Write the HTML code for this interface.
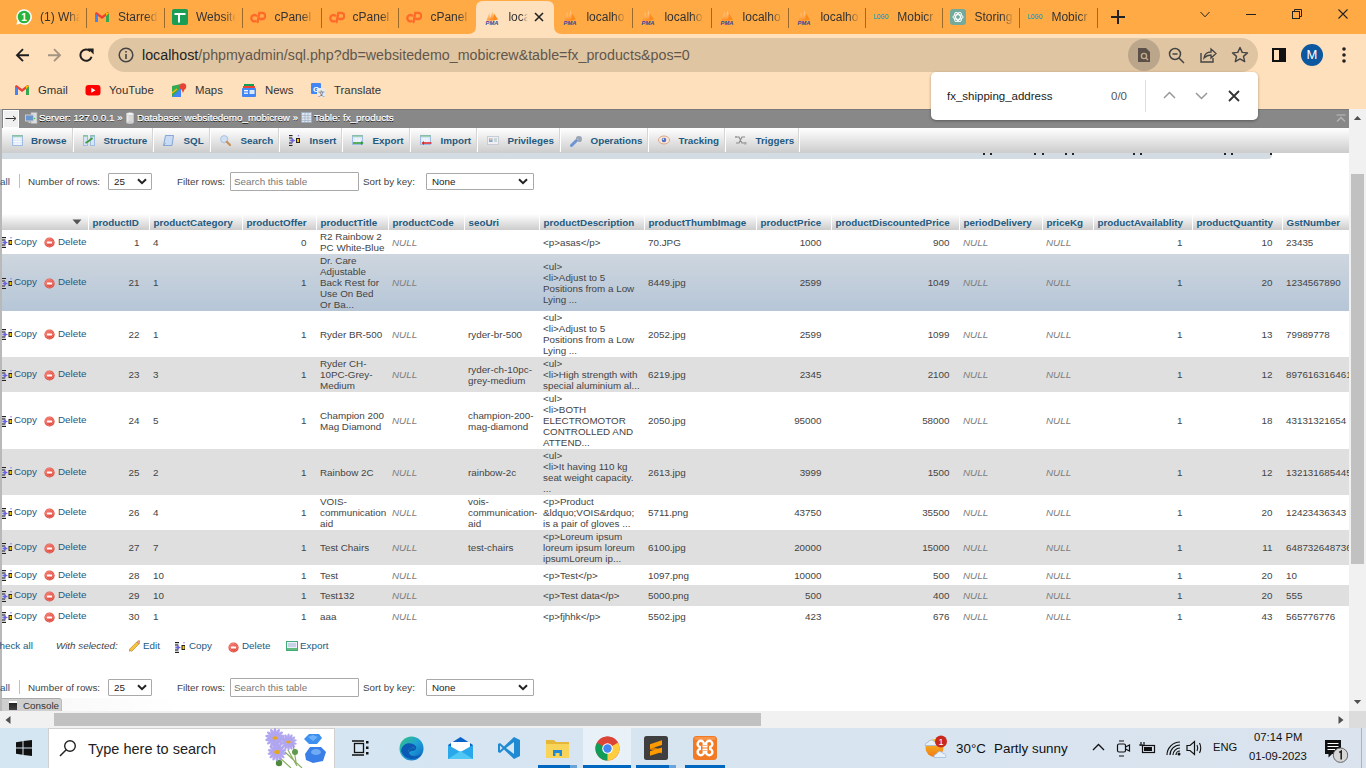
<!DOCTYPE html><html><head><meta charset="utf-8"><style>
*{box-sizing:border-box;margin:0;padding:0}
html,body{width:1366px;height:768px;overflow:hidden;background:#fff;font-family:"Liberation Sans",sans-serif;position:relative}
.abs{position:absolute}
.abs>svg,.ic>svg{display:block}
#tabs{position:absolute;left:0;top:0;width:1366px;height:34px;background:#FFAA45}
.tab{position:absolute;top:0;height:34px;width:78px}
.tab .t{position:absolute;left:32px;top:10px;font-size:12px;color:#333;white-space:nowrap;overflow:hidden;width:40px;
 -webkit-mask-image:linear-gradient(90deg,#000 70%,transparent 100%)}
.tab .ic{position:absolute;left:8px;top:9px;width:16px;height:16px}
.sep{position:absolute;top:8px;width:1px;height:20px;background:#9a6a2a}
#toolbar{position:absolute;left:0;top:34px;width:1366px;height:75px;background:#FFE0BC}
#omni{position:absolute;left:108px;top:38px;width:1150px;height:34px;border-radius:17px;background:#E0C5A2}
#url{position:absolute;left:142px;top:47px;font-size:14.25px;color:#3a3a3a;white-space:nowrap}
.bm{position:absolute;top:83.5px;font-size:11.4px;color:#333;white-space:nowrap}
#pma{position:absolute;left:0;top:109px;width:1349px;height:602px;overflow:hidden;background:#fff}
</style></head><body>
<div id="tabs">
<div class="tab" style="left:8px"><div class="ic"><svg width="16" height="16" viewBox="0 0 16 16"><path d="M8 0.3A7.7 7.7 0 0 0 1.4 11.9L0.3 15.7L4.2 14.6A7.7 7.7 0 1 0 8 0.3z" fill="#fff"/><circle cx="8" cy="8" r="6.3" fill="#29B43F"/><text x="8" y="11.6" font-size="10" font-family="Liberation Sans" font-weight="bold" fill="#fff" text-anchor="middle">1</text></svg></div><div class="t">(1) Wha</div></div>
<div class="tab" style="left:86px"><div class="ic"><svg width="16" height="16" viewBox="0 0 16 16"><path d="M1 4v9h3V7l4 3 4-3v6h3V4l-1.5-1L8 7 2.5 3z" fill="#EA4335"/><path d="M1 4v9h3V7z" fill="#4285F4"/><path d="M12 7v6h3V4z" fill="#34A853"/><path d="M15 4l-3 3V3.5z" fill="#FBBC04"/></svg></div><div class="t">Starred</div></div>
<div class="tab" style="left:164px"><div class="ic"><svg width="16" height="16" viewBox="0 0 16 16"><rect x="0" y="0" width="16" height="16" rx="2" fill="#1A9D55"/><rect x="2.5" y="4" width="11" height="2" fill="#fff"/><rect x="6" y="4" width="2" height="9.5" fill="#fff"/></svg></div><div class="t">Website</div></div>
<div class="tab" style="left:242.4px"><div class="ic"><svg width="16" height="16" viewBox="0 0 16 16"><g fill="none" stroke="#FF6A2A" stroke-width="2.3" stroke-linecap="round"><path d="M6.3 6.6A3.2 3.2 0 1 0 5.6 12.2"/><path d="M7.6 13L9.3 3.8H12.2A3.1 3.1 0 0 1 12.2 10H10.2"/></g></svg></div><div class="t">cPanel</div></div>
<div class="tab" style="left:320.6px"><div class="ic"><svg width="16" height="16" viewBox="0 0 16 16"><g fill="none" stroke="#FF6A2A" stroke-width="2.3" stroke-linecap="round"><path d="M6.3 6.6A3.2 3.2 0 1 0 5.6 12.2"/><path d="M7.6 13L9.3 3.8H12.2A3.1 3.1 0 0 1 12.2 10H10.2"/></g></svg></div><div class="t">cPanel</div></div>
<div class="tab" style="left:398.4px"><div class="ic"><svg width="16" height="16" viewBox="0 0 16 16"><g fill="none" stroke="#FF6A2A" stroke-width="2.3" stroke-linecap="round"><path d="M6.3 6.6A3.2 3.2 0 1 0 5.6 12.2"/><path d="M7.6 13L9.3 3.8H12.2A3.1 3.1 0 0 1 12.2 10H10.2"/></g></svg></div><div class="t">cPanel</div></div>
<div class="abs" style="left:468px;top:0;width:94px;height:34px"><svg width="94" height="34"><path d="M0 34 Q8 34 8 26 V8 Q8 1 15 1 H79 Q86 1 86 8 V26 Q86 34 94 34 Z" fill="#FFE0BC"/></svg></div>
<div class="tab" style="left:476.4px"><div class="ic"><svg width="16" height="16" viewBox="0 0 16 16"><defs><linearGradient id="pg" x1="0" y1="0" x2="0" y2="1"><stop offset="0" stop-color="#ffd8a8"/><stop offset="1" stop-color="#ff8a1c"/></linearGradient></defs><path d="M2.5 11.5L5.5 3L6.5 11.5Z" fill="url(#pg)" opacity=".8"/><path d="M5.5 11.5L8.7 1.5L10.5 11.5Z" fill="url(#pg)"/><path d="M9 11.5L10 4.5L14 10.5Z" fill="#ff8a1c"/><text x="8" y="15.8" font-size="5.8" font-family="Liberation Sans" font-weight="bold" font-style="italic" fill="#34449a" text-anchor="middle">PMA</text></svg></div><div class="t" style="width:20px;-webkit-mask-image:linear-gradient(90deg,#000 65%,transparent 100%)">loca</div><svg class="abs" style="left:57px;top:11px" width="12" height="12" viewBox="0 0 12 12"><path d="M2 2L10 10M10 2L2 10" stroke="#222" stroke-width="1.6"/></svg></div>
<div class="tab" style="left:554.4px"><div class="ic"><svg width="16" height="16" viewBox="0 0 16 16"><defs><linearGradient id="pg" x1="0" y1="0" x2="0" y2="1"><stop offset="0" stop-color="#ffd8a8"/><stop offset="1" stop-color="#ff8a1c"/></linearGradient></defs><path d="M2.5 11.5L5.5 3L6.5 11.5Z" fill="url(#pg)" opacity=".8"/><path d="M5.5 11.5L8.7 1.5L10.5 11.5Z" fill="url(#pg)"/><path d="M9 11.5L10 4.5L14 10.5Z" fill="#ff8a1c"/><text x="8" y="15.8" font-size="5.8" font-family="Liberation Sans" font-weight="bold" font-style="italic" fill="#34449a" text-anchor="middle">PMA</text></svg></div><div class="t">localho</div></div>
<div class="tab" style="left:632.4px"><div class="ic"><svg width="16" height="16" viewBox="0 0 16 16"><defs><linearGradient id="pg" x1="0" y1="0" x2="0" y2="1"><stop offset="0" stop-color="#ffd8a8"/><stop offset="1" stop-color="#ff8a1c"/></linearGradient></defs><path d="M2.5 11.5L5.5 3L6.5 11.5Z" fill="url(#pg)" opacity=".8"/><path d="M5.5 11.5L8.7 1.5L10.5 11.5Z" fill="url(#pg)"/><path d="M9 11.5L10 4.5L14 10.5Z" fill="#ff8a1c"/><text x="8" y="15.8" font-size="5.8" font-family="Liberation Sans" font-weight="bold" font-style="italic" fill="#34449a" text-anchor="middle">PMA</text></svg></div><div class="t">localho</div></div>
<div class="tab" style="left:710.6px"><div class="ic"><svg width="16" height="16" viewBox="0 0 16 16"><defs><linearGradient id="pg" x1="0" y1="0" x2="0" y2="1"><stop offset="0" stop-color="#ffd8a8"/><stop offset="1" stop-color="#ff8a1c"/></linearGradient></defs><path d="M2.5 11.5L5.5 3L6.5 11.5Z" fill="url(#pg)" opacity=".8"/><path d="M5.5 11.5L8.7 1.5L10.5 11.5Z" fill="url(#pg)"/><path d="M9 11.5L10 4.5L14 10.5Z" fill="#ff8a1c"/><text x="8" y="15.8" font-size="5.8" font-family="Liberation Sans" font-weight="bold" font-style="italic" fill="#34449a" text-anchor="middle">PMA</text></svg></div><div class="t">localho</div></div>
<div class="tab" style="left:788.4px"><div class="ic"><svg width="16" height="16" viewBox="0 0 16 16"><defs><linearGradient id="pg" x1="0" y1="0" x2="0" y2="1"><stop offset="0" stop-color="#ffd8a8"/><stop offset="1" stop-color="#ff8a1c"/></linearGradient></defs><path d="M2.5 11.5L5.5 3L6.5 11.5Z" fill="url(#pg)" opacity=".8"/><path d="M5.5 11.5L8.7 1.5L10.5 11.5Z" fill="url(#pg)"/><path d="M9 11.5L10 4.5L14 10.5Z" fill="#ff8a1c"/><text x="8" y="15.8" font-size="5.8" font-family="Liberation Sans" font-weight="bold" font-style="italic" fill="#34449a" text-anchor="middle">PMA</text></svg></div><div class="t">localho</div></div>
<div class="tab" style="left:865.3px"><div class="ic"><svg width="16" height="16" viewBox="0 0 16 16"><text x="0.5" y="10" font-size="6.5" font-family="Liberation Sans" font-weight="bold" fill="#2b9fb5" textLength="15" lengthAdjust="spacingAndGlyphs">LOGO</text></svg></div><div class="t">Mobicr</div></div>
<div class="tab" style="left:942.4px"><div class="ic"><svg width="16" height="16" viewBox="0 0 16 16"><rect width="16" height="16" rx="3" fill="#74AA9C"/><g fill="none" stroke="#fff" stroke-width="1"><ellipse cx="8" cy="8" rx="5" ry="2.3"/><ellipse cx="8" cy="8" rx="5" ry="2.3" transform="rotate(60 8 8)"/><ellipse cx="8" cy="8" rx="5" ry="2.3" transform="rotate(120 8 8)"/></g></svg></div><div class="t">Storing</div></div>
<div class="tab" style="left:1019.4px"><div class="ic"><svg width="16" height="16" viewBox="0 0 16 16"><text x="0.5" y="10" font-size="6.5" font-family="Liberation Sans" font-weight="bold" fill="#2b9fb5" textLength="15" lengthAdjust="spacingAndGlyphs">LOGO</text></svg></div><div class="t">Mobicr</div></div>
<div class="sep" style="left:86px"></div>
<div class="sep" style="left:164px"></div>
<div class="sep" style="left:242px"></div>
<div class="sep" style="left:321px"></div>
<div class="sep" style="left:398px"></div>
<div class="sep" style="left:632px"></div>
<div class="sep" style="left:711px"></div>
<div class="sep" style="left:788px"></div>
<div class="sep" style="left:865px"></div>
<div class="sep" style="left:942px"></div>
<div class="sep" style="left:1019px"></div>
<div class="sep" style="left:1097px"></div>
<svg class="abs" style="left:1110px;top:9px" width="16" height="16" viewBox="0 0 16 16"><path d="M8 1V15M1 8H15" stroke="#222" stroke-width="2"/></svg>
<svg class="abs" style="left:1200px;top:10.5px" width="10" height="7" viewBox="0 0 10 7"><path d="M0.5 1L5 5.8L9.5 1" fill="none" stroke="#222" stroke-width="1"/></svg>
<div class="abs" style="left:1246px;top:14px;width:10px;height:1px;background:#222"></div>
<svg class="abs" style="left:1292px;top:9px" width="10" height="10" viewBox="0 0 10 10"><rect x="0.5" y="2.5" width="7" height="7" fill="none" stroke="#222"/><path d="M2.5 2.5V0.5H9.5V7.5H7.5" fill="none" stroke="#222"/></svg>
<svg class="abs" style="left:1338px;top:9px" width="10" height="10" viewBox="0 0 10 10"><path d="M0.5 0.5L9.5 9.5M9.5 0.5L0.5 9.5" stroke="#222" stroke-width="1.1"/></svg>
</div>
<div id="toolbar"></div>
<svg class="abs" style="left:14.5px;top:48px" width="15" height="15" viewBox="0 0 15 15"><path d="M14 7.2H2.2M8 1.2L2 7.2L8 13.2" fill="none" stroke="#1f1f1f" stroke-width="1.9"/></svg>
<svg class="abs" style="left:46.5px;top:48px" width="15" height="15" viewBox="0 0 15 15"><path d="M1 7.2H12.8M7 1.2L13 7.2L7 13.2" fill="none" stroke="#a39582" stroke-width="1.9"/></svg>
<svg class="abs" style="left:79px;top:48px" width="15" height="15" viewBox="0 0 15 15"><path d="M12.6 8.8A5.7 5.7 0 1 1 11.3 3.2" fill="none" stroke="#1f1f1f" stroke-width="2"/><path d="M8.6 0.6H14.6V6.6Z" fill="#1f1f1f"/></svg>
<div id="omni"></div>
<svg class="abs" style="left:118px;top:47px" width="16" height="16" viewBox="0 0 16 16"><circle cx="8" cy="8" r="6.8" fill="none" stroke="#444" stroke-width="1.5"/><rect x="7.2" y="7" width="1.6" height="5" fill="#444"/><rect x="7.2" y="4" width="1.6" height="1.6" fill="#444"/></svg>
<div id="url"><span style="color:#1e1e1e">localhost</span><span style="color:#62574c">/phpmyadmin/sql.php?db=websitedemo_mobicrew&amp;table=fx_products&amp;pos=0</span></div>
<div class="abs" style="left:1128px;top:39px;width:32px;height:32px;border-radius:16px;background:#BCA68B"></div>
<svg class="abs" style="left:1137px;top:47px" width="14" height="16" viewBox="0 0 14 16"><path d="M1 1H9L13 5V15H1Z" fill="#5a5048"/><circle cx="7" cy="9" r="2.6" fill="none" stroke="#C5AA89" stroke-width="1.4"/><path d="M8.8 10.8L11 13" stroke="#C5AA89" stroke-width="1.4"/></svg>
<svg class="abs" style="left:1168px;top:47px" width="17" height="17" viewBox="0 0 17 17"><circle cx="7" cy="7" r="5.5" fill="none" stroke="#444" stroke-width="1.5"/><path d="M4.5 7H9.5M11 11L16 16" stroke="#444" stroke-width="1.5"/></svg>
<svg class="abs" style="left:1200px;top:47px" width="17" height="16" viewBox="0 0 17 16"><path d="M1 6V15H13V11" fill="none" stroke="#444" stroke-width="1.4"/><path d="M4 11Q5 5 11 5V2L16 6.5L11 11V8Q7 8 4 11Z" fill="none" stroke="#444" stroke-width="1.3"/></svg>
<svg class="abs" style="left:1231px;top:46px" width="18" height="18" viewBox="0 0 18 18"><path d="M9 1.5L11.2 6.4L16.5 6.9L12.5 10.4L13.7 15.6L9 12.9L4.3 15.6L5.5 10.4L1.5 6.9L6.8 6.4Z" fill="none" stroke="#444" stroke-width="1.4" stroke-linejoin="round"/></svg>
<svg class="abs" style="left:1272px;top:48px" width="14" height="14" viewBox="0 0 14 14"><rect x="1" y="1" width="12" height="12" fill="none" stroke="#111" stroke-width="2"/><rect x="7" y="1" width="6" height="12" fill="#111"/></svg>
<div class="abs" style="left:1301px;top:44px;width:22px;height:22px;border-radius:11px;background:#0B57A0;color:#fff;font-size:13px;text-align:center;line-height:22px">M</div>
<svg class="abs" style="left:1342px;top:47px" width="4" height="16" viewBox="0 0 4 16"><circle cx="2" cy="2" r="1.8" fill="#222"/><circle cx="2" cy="8" r="1.8" fill="#222"/><circle cx="2" cy="14" r="1.8" fill="#222"/></svg>
<div class="abs" style="left:14px;top:82px;width:16px;height:16px"><svg width="16" height="16" viewBox="0 0 16 16"><path d="M1 4v9h3V7l4 3 4-3v6h3V4l-1.5-1L8 7 2.5 3z" fill="#EA4335"/><path d="M1 4v9h3V7z" fill="#4285F4"/><path d="M12 7v6h3V4z" fill="#34A853"/><path d="M15 4l-3 3V3.5z" fill="#FBBC04"/></svg></div>
<div class="bm" style="left:38px">Gmail</div>
<div class="abs" style="left:85px;top:82px;width:16px;height:16px"><svg width="16" height="16" viewBox="0 0 16 16"><rect x="0.5" y="3" width="15" height="10.5" rx="3" fill="#FF0000"/><path d="M6.3 5.8V10.8L10.5 8.3Z" fill="#fff"/></svg></div>
<div class="bm" style="left:109px">YouTube</div>
<div class="abs" style="left:171px;top:82px;width:16px;height:16px"><svg width="16" height="16" viewBox="0 0 16 16"><path d="M1 4L10 2V15L1 15Z" fill="#34A853"/><path d="M1 15L10 6V15Z" fill="#4285F4"/><path d="M1 11L6 7" stroke="#FBBC04" stroke-width="1.5"/><circle cx="12" cy="4.5" r="3.2" fill="#EA4335"/><path d="M10 6L12 11L14 6Z" fill="#EA4335"/></svg></div>
<div class="bm" style="left:195px">Maps</div>
<div class="abs" style="left:241px;top:82px;width:16px;height:16px"><svg width="16" height="16" viewBox="0 0 16 16"><rect x="3" y="2" width="10" height="4" fill="#0F9D58"/><rect x="2" y="4" width="12" height="4" fill="#EA4335"/><rect x="1" y="6" width="14" height="9" rx="1" fill="#4285F4"/><rect x="3" y="8" width="4" height="1.3" fill="#fff"/><rect x="3" y="10.5" width="4" height="1.3" fill="#fff"/><rect x="8.5" y="8" width="5" height="4" fill="#fff" opacity=".8"/></svg></div>
<div class="bm" style="left:265px">News</div>
<div class="abs" style="left:310px;top:82px;width:16px;height:16px"><svg width="16" height="16" viewBox="0 0 16 16"><rect x="1" y="1" width="10" height="11" rx="1" fill="#4285F4"/><text x="6" y="9.5" font-size="8" font-family="Liberation Sans" font-weight="bold" fill="#fff" text-anchor="middle">G</text><rect x="7" y="6" width="8" height="9" rx="1" fill="#E8EAED"/><text x="11" y="13.5" font-size="7" font-family="Liberation Sans" fill="#555" text-anchor="middle">文</text></svg></div>
<div class="bm" style="left:334px">Translate</div>
<div id="pma"><div class="abs" style="left:0;top:0;width:2px;height:604px;background:#b9b9b9"></div>
<div class="abs" style="left:2px;top:0px;width:1348px;height:19px;background:#888;border-top:1px solid #7a7a7a"></div>
<div class="abs" style="left:3px;top:1px;width:16px;height:18px;background:#f0f0f0;border:1px solid #fff;"></div>
<svg class="abs" style="left:5px;top:6px" width="12" height="7" viewBox="0 0 12 7"><path d="M0.5 3.5H10.5" stroke="#333" stroke-width="1"/><path d="M8 1L11 3.5L8 6" fill="none" stroke="#333" stroke-width="0.9"/></svg>
<svg class="abs" style="left:25px;top:3px" width="13" height="13" viewBox="0 0 13 13"><rect x="6" y="0.5" width="6" height="11" fill="#ddd" stroke="#aaa" stroke-width=".6"/><rect x="0.5" y="3" width="8" height="6" fill="#6b95cf" stroke="#ccc" stroke-width="1"/><rect x="3.5" y="9.5" width="2" height="1.5" fill="#ccc"/><circle cx="9.5" cy="6.5" r="0.8" fill="#3c3"/></svg>
<div class="abs" style="left:39px;top:2.799999999999997px;color:#fff;font-size:9.84px;text-shadow:0 1px 0 #000;-webkit-text-stroke:0.25px #fff;white-space:nowrap">Server: 127.0.0.1 <span style="font-size:9.5px">»</span></div>
<svg class="abs" style="left:126px;top:3px" width="8" height="12" viewBox="0 0 8 12"><rect x="0.3" y="2" width="7.4" height="8.3" fill="#d8d8d8"/><ellipse cx="4" cy="10.3" rx="3.7" ry="1.5" fill="#d0d0d0"/><ellipse cx="4" cy="2" rx="3.7" ry="1.5" fill="#f4f4f4" stroke="#bbb" stroke-width=".5"/><rect x="1.2" y="3.5" width="1.2" height="6" fill="#fff" opacity=".6"/></svg>
<div class="abs" style="left:137px;top:2.799999999999997px;color:#fff;font-size:9.84px;text-shadow:0 1px 0 #000;-webkit-text-stroke:0.25px #fff;white-space:nowrap">Database: websitedemo_mobicrew <span style="font-size:9.5px">»</span></div>
<svg class="abs" style="left:301px;top:3px" width="11" height="11" viewBox="0 0 11 11"><rect x="0.5" y="0.5" width="10" height="10" fill="#dde6f2" stroke="#9ab" stroke-width=".8"/><path d="M0.5 3.5H10.5M0.5 6H10.5M0.5 8.5H10.5M4 0.5V10.5M7 0.5V10.5" stroke="#9ab" stroke-width=".6"/></svg>
<div class="abs" style="left:314px;top:2.799999999999997px;color:#fff;font-size:9.84px;text-shadow:0 1px 0 #000;-webkit-text-stroke:0.25px #fff;white-space:nowrap">Table: fx_products</div>
<svg class="abs" style="left:1336px;top:5px" width="10" height="9" viewBox="0 0 10 9"><path d="M0.5 1H9.5" stroke="#b5b5b5" stroke-width="1.2"/><path d="M1 7.5L5 3.5L9 7.5" fill="none" stroke="#b5b5b5" stroke-width="1.3"/></svg>
<div class="abs" style="left:2px;top:19px;width:1348px;height:25px;background:linear-gradient(#ffffff,#cccccc)"></div>
<div class="abs" style="left:73px;top:19px;width:1px;height:24px;background:#fff;box-shadow:-1px 0 0 #d5d5d5"></div>
<div class="abs" style="left:31px;top:25.5px;font-size:9.84px;font-weight:bold;color:#235a81;white-space:nowrap">Browse</div>
<div class="abs tabic" style="left:12px;top:26px;width:12px;height:12px"><svg width="11" height="11" viewBox="0 0 11 11"><rect x="0.5" y="0.5" width="10" height="10" fill="#d5e4f6" stroke="#9fbde3"/><path d="M0.5 1H10.5" stroke="#6cbf6c" stroke-width="1"/><path d="M1 4H10M1 6.5H10M1 9H10M4 3V10M7 3V10" stroke="#fff" stroke-width=".8"/></svg></div>
<div class="abs" style="left:153px;top:19px;width:1px;height:24px;background:#fff;box-shadow:-1px 0 0 #d5d5d5"></div>
<div class="abs" style="left:103.5px;top:25.5px;font-size:9.84px;font-weight:bold;color:#235a81;white-space:nowrap">Structure</div>
<div class="abs tabic" style="left:83px;top:26px;width:12px;height:12px"><svg width="12" height="11" viewBox="0 0 12 11"><rect x="0.5" y="0.5" width="4" height="10" fill="#d5e4f6" stroke="#9fbde3"/><rect x="7.5" y="0.5" width="4" height="10" fill="#d5e4f6" stroke="#9fbde3"/><path d="M0.5 1H4.5M7.5 1H11.5" stroke="#6cbf6c"/><path d="M2.5 8L5 6.5L7 5L9.5 3" fill="none" stroke="#3d9a3d" stroke-width="1.8"/></svg></div>
<div class="abs" style="left:210px;top:19px;width:1px;height:24px;background:#fff;box-shadow:-1px 0 0 #d5d5d5"></div>
<div class="abs" style="left:183.5px;top:25.5px;font-size:9.84px;font-weight:bold;color:#235a81;white-space:nowrap">SQL</div>
<div class="abs tabic" style="left:163px;top:26px;width:12px;height:12px"><svg width="11" height="11" viewBox="0 0 11 11"><path d="M2.5 0.5H10.5L9 10.5H0.5Z" fill="#c9dcf3" stroke="#7c9fcf" stroke-width=".9"/><path d="M0.5 10.5Q2 9 2.6 8" stroke="#7c9fcf" fill="none" stroke-width=".8"/></svg></div>
<div class="abs" style="left:279px;top:19px;width:1px;height:24px;background:#fff;box-shadow:-1px 0 0 #d5d5d5"></div>
<div class="abs" style="left:240.5px;top:25.5px;font-size:9.84px;font-weight:bold;color:#235a81;white-space:nowrap">Search</div>
<div class="abs tabic" style="left:220px;top:26px;width:12px;height:12px"><svg width="11" height="11" viewBox="0 0 11 11"><circle cx="4.2" cy="4.2" r="3.6" fill="#cfe0f5" stroke="#a9c0dc" stroke-width="1"/><path d="M6.8 6.8L10 10" stroke="#c8905a" stroke-width="2.2" stroke-linecap="round"/></svg></div>
<div class="abs" style="left:342px;top:19px;width:1px;height:24px;background:#fff;box-shadow:-1px 0 0 #d5d5d5"></div>
<div class="abs" style="left:309.5px;top:25.5px;font-size:9.84px;font-weight:bold;color:#235a81;white-space:nowrap">Insert</div>
<div class="abs tabic" style="left:289px;top:26px;width:12px;height:12px"><svg width="11" height="11" viewBox="0 0 11 11"><rect x="0" y="0" width="3.5" height="11" fill="#d0d0d0"/><path d="M0 0.5H3.5M0 3H3M0 8H3M0 10.5H3.5" stroke="#222" stroke-width="1"/><path d="M3.5 2.5L4.4 4.6L6.5 5.5L4.4 6.4L3.5 8.5L2.6 6.4L0.5 5.5L2.6 4.6Z" fill="#6c63e0"/><rect x="7.5" y="3.5" width="3" height="4" fill="#f5c400" stroke="#222" stroke-width="1"/><circle cx="9.5" cy="0.8" r="0.8" fill="#8a7ff0"/></svg></div>
<div class="abs" style="left:410px;top:19px;width:1px;height:24px;background:#fff;box-shadow:-1px 0 0 #d5d5d5"></div>
<div class="abs" style="left:372.5px;top:25.5px;font-size:9.84px;font-weight:bold;color:#235a81;white-space:nowrap">Export</div>
<div class="abs tabic" style="left:352px;top:26px;width:12px;height:12px"><svg width="12" height="11" viewBox="0 0 12 11"><rect x="0.5" y="0.5" width="10" height="9" fill="#d5e4f6" stroke="#9fbde3"/><path d="M0.5 1H10.5" stroke="#6cbf6c"/><path d="M1 4H10M1 6H10M4 3V9M7 3V9" stroke="#fff" stroke-width=".7"/><path d="M1 8H10" stroke="#2a9a2a" stroke-width="1.5"/><path d="M9 6L11.5 8L9 10Z" fill="#2a9a2a"/></svg></div>
<div class="abs" style="left:477px;top:19px;width:1px;height:24px;background:#fff;box-shadow:-1px 0 0 #d5d5d5"></div>
<div class="abs" style="left:440.5px;top:25.5px;font-size:9.84px;font-weight:bold;color:#235a81;white-space:nowrap">Import</div>
<div class="abs tabic" style="left:420px;top:26px;width:12px;height:12px"><svg width="12" height="11" viewBox="0 0 12 11"><rect x="0.5" y="0.5" width="10" height="9" fill="#d5e4f6" stroke="#9fbde3"/><path d="M0.5 1H10.5" stroke="#6cbf6c"/><path d="M1 4H10M1 6H10M4 3V9M7 3V9" stroke="#fff" stroke-width=".7"/><path d="M3 8H11.5" stroke="#e02020" stroke-width="1.5"/><path d="M4 6L1.5 8L4 10Z" fill="#e02020"/></svg></div>
<div class="abs" style="left:560px;top:19px;width:1px;height:24px;background:#fff;box-shadow:-1px 0 0 #d5d5d5"></div>
<div class="abs" style="left:507.5px;top:25.5px;font-size:9.84px;font-weight:bold;color:#235a81;white-space:nowrap">Privileges</div>
<div class="abs tabic" style="left:487px;top:26px;width:12px;height:12px"><svg width="12" height="11" viewBox="0 0 12 11"><rect x="0.5" y="1.5" width="11" height="8" fill="#eef0f4" stroke="#c8ccd4"/><rect x="2" y="3.5" width="3.5" height="3.5" fill="#7aa6d6"/><circle cx="3.7" cy="4.5" r="1" fill="#f2c9a0"/><path d="M7 4H10M7 6H10" stroke="#9aa" stroke-width=".8"/></svg></div>
<div class="abs" style="left:648px;top:19px;width:1px;height:24px;background:#fff;box-shadow:-1px 0 0 #d5d5d5"></div>
<div class="abs" style="left:590.5px;top:25.5px;font-size:9.84px;font-weight:bold;color:#235a81;white-space:nowrap">Operations</div>
<div class="abs tabic" style="left:570px;top:26px;width:12px;height:12px"><svg width="12" height="12" viewBox="0 0 12 12"><path d="M1.5 10.5L6.5 5.5" stroke="#6d95d6" stroke-width="3" stroke-linecap="round"/><path d="M6 4.5A3 3 0 1 1 8.5 7L7.5 6L8.5 5L7.5 4L6.5 5Z" fill="#9aa6b8"/></svg></div>
<div class="abs" style="left:725px;top:19px;width:1px;height:24px;background:#fff;box-shadow:-1px 0 0 #d5d5d5"></div>
<div class="abs" style="left:678.5px;top:25.5px;font-size:9.84px;font-weight:bold;color:#235a81;white-space:nowrap">Tracking</div>
<div class="abs tabic" style="left:658px;top:26px;width:12px;height:12px"><svg width="12" height="10" viewBox="0 0 12 10"><ellipse cx="6" cy="5" rx="5.5" ry="4" fill="#fbe6d6" stroke="#d7a78a" stroke-width="1"/><circle cx="6" cy="5" r="2.3" fill="#4f72c8"/><circle cx="5.4" cy="4.3" r=".7" fill="#fff"/></svg></div>
<div class="abs" style="left:755.5px;top:25.5px;font-size:9.84px;font-weight:bold;color:#235a81;white-space:nowrap">Triggers</div>
<div class="abs tabic" style="left:735px;top:26px;width:12px;height:12px"><svg width="12" height="11" viewBox="0 0 12 11"><path d="M1 2H4L7 8H10M1 8H4L7 2H10" fill="none" stroke="#8a8a8a" stroke-width="1.1"/><rect x="0" y="1" width="2" height="2" fill="#aaa"/><rect x="9" y="7" width="2.5" height="2.5" fill="#aaa"/></svg></div>
<div class="abs" style="left:799px;top:19px;width:1px;height:24px;background:#fff;box-shadow:-1px 0 0 #d5d5d5"></div>
<div class="abs" style="left:2px;top:44px;width:1270px;height:6px;background:#D3DCE3;border-radius:0 0 4px 0"></div>
<div class="abs" style="left:983px;top:44px;width:2px;height:1.5px;background:#222"></div>
<div class="abs" style="left:990px;top:44px;width:2px;height:1.5px;background:#222"></div>
<div class="abs" style="left:1034px;top:44px;width:2px;height:1.5px;background:#222"></div>
<div class="abs" style="left:1042px;top:44px;width:2px;height:1.5px;background:#222"></div>
<div class="abs" style="left:1065px;top:44px;width:2px;height:1.5px;background:#222"></div>
<div class="abs" style="left:1072px;top:44px;width:2px;height:1.5px;background:#222"></div>
<div class="abs" style="left:1133px;top:44px;width:2px;height:1.5px;background:#222"></div>
<div class="abs" style="left:1140px;top:44px;width:2px;height:1.5px;background:#222"></div>
<div class="abs" style="left:1224px;top:44px;width:2px;height:1.5px;background:#222"></div>
<div class="abs" style="left:1231px;top:44px;width:2px;height:1.5px;background:#222"></div>
<div class="abs" style="left:1270px;top:44px;width:2px;height:1.5px;background:#222"></div>
<div class="abs" style="left:0px;top:67px;font-size:9.84px;color:#235a81">all</div>
<div class="abs" style="left:19px;top:65px;width:1px;height:14px;background:#e6b884"></div>
<div class="abs" style="left:28px;top:67px;font-size:9.84px;color:#444">Number of rows:</div>
<div class="abs" style="left:108px;top:63.5px;width:44px;height:17.5px;border:1px solid #a9a9a9;border-radius:1px;background:#fff"></div>
<div class="abs" style="left:114px;top:67px;font-size:9.84px;color:#222">25</div>
<svg class="abs" style="left:137px;top:69px" width="10" height="7" viewBox="0 0 10 7"><path d="M1 1.2L5 5.2L9 1.2" fill="none" stroke="#222" stroke-width="2"/></svg>
<div class="abs" style="left:177px;top:67px;font-size:9.84px;color:#444">Filter rows:</div>
<div class="abs" style="left:230px;top:63px;width:129px;height:18.5px;border:1px solid #a9a9a9;border-radius:1px;background:#fff"></div>
<div class="abs" style="left:234px;top:67px;font-size:9.84px;color:#777">Search this table</div>
<div class="abs" style="left:363px;top:67px;font-size:9.84px;color:#444">Sort by key:</div>
<div class="abs" style="left:426px;top:63.5px;width:108px;height:17.5px;border:1px solid #a9a9a9;border-radius:1px;background:#fff"></div>
<div class="abs" style="left:432px;top:67px;font-size:9.84px;color:#222">None</div>
<svg class="abs" style="left:518px;top:69px" width="10" height="7" viewBox="0 0 10 7"><path d="M1 1.2L5 5.2L9 1.2" fill="none" stroke="#222" stroke-width="2"/></svg>
<div class="abs" style="left:2px;top:105px;width:1348px;height:16px;background:linear-gradient(#ffffff,#cccccc)"></div>
<div class="abs" style="left:88px;top:105px;width:1px;height:16px;background:#fff"></div>
<div class="abs" style="left:92.5px;top:108px;font-size:9.84px;font-weight:bold;color:#235a81;white-space:nowrap">productID</div>
<div class="abs" style="left:149px;top:105px;width:1px;height:16px;background:#fff"></div>
<div class="abs" style="left:153.5px;top:108px;font-size:9.84px;font-weight:bold;color:#235a81;white-space:nowrap">productCategory</div>
<div class="abs" style="left:242px;top:105px;width:1px;height:16px;background:#fff"></div>
<div class="abs" style="left:246.5px;top:108px;font-size:9.84px;font-weight:bold;color:#235a81;white-space:nowrap">productOffer</div>
<div class="abs" style="left:316px;top:105px;width:1px;height:16px;background:#fff"></div>
<div class="abs" style="left:320.5px;top:108px;font-size:9.84px;font-weight:bold;color:#235a81;white-space:nowrap">productTitle</div>
<div class="abs" style="left:388px;top:105px;width:1px;height:16px;background:#fff"></div>
<div class="abs" style="left:392.5px;top:108px;font-size:9.84px;font-weight:bold;color:#235a81;white-space:nowrap">productCode</div>
<div class="abs" style="left:464px;top:105px;width:1px;height:16px;background:#fff"></div>
<div class="abs" style="left:468.5px;top:108px;font-size:9.84px;font-weight:bold;color:#235a81;white-space:nowrap">seoUri</div>
<div class="abs" style="left:539px;top:105px;width:1px;height:16px;background:#fff"></div>
<div class="abs" style="left:543.5px;top:108px;font-size:9.84px;font-weight:bold;color:#235a81;white-space:nowrap">productDescription</div>
<div class="abs" style="left:644px;top:105px;width:1px;height:16px;background:#fff"></div>
<div class="abs" style="left:648.5px;top:108px;font-size:9.84px;font-weight:bold;color:#235a81;white-space:nowrap">productThumbImage</div>
<div class="abs" style="left:756px;top:105px;width:1px;height:16px;background:#fff"></div>
<div class="abs" style="left:760.5px;top:108px;font-size:9.84px;font-weight:bold;color:#235a81;white-space:nowrap">productPrice</div>
<div class="abs" style="left:831px;top:105px;width:1px;height:16px;background:#fff"></div>
<div class="abs" style="left:835.5px;top:108px;font-size:9.84px;font-weight:bold;color:#235a81;white-space:nowrap">productDiscountedPrice</div>
<div class="abs" style="left:959px;top:105px;width:1px;height:16px;background:#fff"></div>
<div class="abs" style="left:963.5px;top:108px;font-size:9.84px;font-weight:bold;color:#235a81;white-space:nowrap">periodDelivery</div>
<div class="abs" style="left:1042px;top:105px;width:1px;height:16px;background:#fff"></div>
<div class="abs" style="left:1046.5px;top:108px;font-size:9.84px;font-weight:bold;color:#235a81;white-space:nowrap">priceKg</div>
<div class="abs" style="left:1093px;top:105px;width:1px;height:16px;background:#fff"></div>
<div class="abs" style="left:1097.5px;top:108px;font-size:9.84px;font-weight:bold;color:#235a81;white-space:nowrap">productAvailablity</div>
<div class="abs" style="left:1192px;top:105px;width:1px;height:16px;background:#fff"></div>
<div class="abs" style="left:1196.5px;top:108px;font-size:9.84px;font-weight:bold;color:#235a81;white-space:nowrap">productQuantity</div>
<div class="abs" style="left:1282px;top:105px;width:1px;height:16px;background:#fff"></div>
<div class="abs" style="left:1286.5px;top:108px;font-size:9.84px;font-weight:bold;color:#235a81;white-space:nowrap">GstNumber</div>
<svg class="abs" style="left:72px;top:110px" width="10" height="6" viewBox="0 0 10 6"><path d="M0.5 0.5H9.5L5 5.5Z" fill="#555"/></svg>
<div class="abs" style="left:2px;top:121px;width:1347px;height:24px;background:#fff"></div>
<div class="abs" style="left:2px;top:128.0px;width:10px;height:11px"><svg width="10" height="11" viewBox="0 0 10 11"><rect x="0" y="0" width="4" height="11" fill="#d0d0d0"/><path d="M0 0.5H4M0 3H3M0 8H3M0 10.5H4" stroke="#222" stroke-width="1"/><path d="M3 2.5L3.9 4.6L6 5.5L3.9 6.4L3 8.5L2.1 6.4L0 5.5L2.1 4.6Z" fill="#6c63e0"/><rect x="7" y="3.5" width="3" height="4" fill="#f5c400" stroke="#222" stroke-width="1"/><circle cx="9" cy="0.8" r="0.8" fill="#8a7ff0"/></svg></div>
<div class="abs" style="left:14px;top:126.5px;font-size:9.84px;color:#235a81">Copy</div>
<div class="abs" style="left:44px;top:128.0px;width:11px;height:11px"><svg width="11" height="11" viewBox="0 0 11 11"><defs><radialGradient id="dg" cx=".4" cy=".35" r=".7"><stop offset="0" stop-color="#f47a6e"/><stop offset="1" stop-color="#d9372b"/></radialGradient></defs><circle cx="5.5" cy="5.5" r="5.1" fill="url(#dg)"/><circle cx="5.5" cy="5.5" r="3.9" fill="none" stroke="#f9b5ae" stroke-width=".7" stroke-dasharray="1 .6"/><rect x="2.8" y="4.6" width="5.4" height="1.9" rx=".5" fill="#fff"/></svg></div>
<div class="abs" style="left:58px;top:126.5px;font-size:9.84px;color:#235a81">Delete</div>
<div class="abs" style="left:88px;width:51.5px;text-align:right;top:127.5px;font-size:9.84px;line-height:11px;white-space:nowrap;color:#444">1</div>
<div class="abs" style="left:153px;top:127.5px;font-size:9.84px;line-height:11px;white-space:nowrap;color:#444">4</div>
<div class="abs" style="left:242px;width:64.5px;text-align:right;top:127.5px;font-size:9.84px;line-height:11px;white-space:nowrap;color:#444">0</div>
<div class="abs" style="left:320px;top:122.0px;font-size:9.84px;line-height:11px;white-space:nowrap;color:#444">R2 Rainbow 2<br>PC White-Blue</div>
<div class="abs" style="left:392px;top:127.5px;font-size:9.84px;line-height:11px;white-space:nowrap;font-style:italic;color:#7d7d7d">NULL</div>
<div class="abs" style="left:468px;top:127.5px;font-size:9.84px;line-height:11px;white-space:nowrap;color:#444"></div>
<div class="abs" style="left:543px;top:127.5px;font-size:9.84px;line-height:11px;white-space:nowrap;color:#444">&lt;p&gt;asas&lt;/p&gt;</div>
<div class="abs" style="left:648px;top:127.5px;font-size:9.84px;line-height:11px;white-space:nowrap;color:#444">70.JPG</div>
<div class="abs" style="left:756px;width:65.5px;text-align:right;top:127.5px;font-size:9.84px;line-height:11px;white-space:nowrap;color:#444">1000</div>
<div class="abs" style="left:831px;width:118.5px;text-align:right;top:127.5px;font-size:9.84px;line-height:11px;white-space:nowrap;color:#444">900</div>
<div class="abs" style="left:963px;top:127.5px;font-size:9.84px;line-height:11px;white-space:nowrap;font-style:italic;color:#7d7d7d">NULL</div>
<div class="abs" style="left:1046px;top:127.5px;font-size:9.84px;line-height:11px;white-space:nowrap;font-style:italic;color:#7d7d7d">NULL</div>
<div class="abs" style="left:1093px;width:89.5px;text-align:right;top:127.5px;font-size:9.84px;line-height:11px;white-space:nowrap;color:#444">1</div>
<div class="abs" style="left:1192px;width:80.5px;text-align:right;top:127.5px;font-size:9.84px;line-height:11px;white-space:nowrap;color:#444">10</div>
<div class="abs" style="left:1286px;top:127.5px;font-size:9.84px;line-height:11px;white-space:nowrap;color:#444">23435</div>
<div class="abs" style="left:2px;top:145px;width:1347px;height:57px;background:linear-gradient(#ced6df,#b6c6d7)"></div>
<div class="abs" style="left:2px;top:168.5px;width:10px;height:11px"><svg width="10" height="11" viewBox="0 0 10 11"><rect x="0" y="0" width="4" height="11" fill="#d0d0d0"/><path d="M0 0.5H4M0 3H3M0 8H3M0 10.5H4" stroke="#222" stroke-width="1"/><path d="M3 2.5L3.9 4.6L6 5.5L3.9 6.4L3 8.5L2.1 6.4L0 5.5L2.1 4.6Z" fill="#6c63e0"/><rect x="7" y="3.5" width="3" height="4" fill="#f5c400" stroke="#222" stroke-width="1"/><circle cx="9" cy="0.8" r="0.8" fill="#8a7ff0"/></svg></div>
<div class="abs" style="left:14px;top:167.0px;font-size:9.84px;color:#235a81">Copy</div>
<div class="abs" style="left:44px;top:168.5px;width:11px;height:11px"><svg width="11" height="11" viewBox="0 0 11 11"><defs><radialGradient id="dg" cx=".4" cy=".35" r=".7"><stop offset="0" stop-color="#f47a6e"/><stop offset="1" stop-color="#d9372b"/></radialGradient></defs><circle cx="5.5" cy="5.5" r="5.1" fill="url(#dg)"/><circle cx="5.5" cy="5.5" r="3.9" fill="none" stroke="#f9b5ae" stroke-width=".7" stroke-dasharray="1 .6"/><rect x="2.8" y="4.6" width="5.4" height="1.9" rx=".5" fill="#fff"/></svg></div>
<div class="abs" style="left:58px;top:167.0px;font-size:9.84px;color:#235a81">Delete</div>
<div class="abs" style="left:88px;width:51.5px;text-align:right;top:168.0px;font-size:9.84px;line-height:11px;white-space:nowrap;color:#444">21</div>
<div class="abs" style="left:153px;top:168.0px;font-size:9.84px;line-height:11px;white-space:nowrap;color:#444">1</div>
<div class="abs" style="left:242px;width:64.5px;text-align:right;top:168.0px;font-size:9.84px;line-height:11px;white-space:nowrap;color:#444">1</div>
<div class="abs" style="left:320px;top:146.0px;font-size:9.84px;line-height:11px;white-space:nowrap;color:#444">Dr. Care<br>Adjustable<br>Back Rest for<br>Use On Bed<br>Or Ba...</div>
<div class="abs" style="left:392px;top:168.0px;font-size:9.84px;line-height:11px;white-space:nowrap;font-style:italic;color:#7d7d7d">NULL</div>
<div class="abs" style="left:468px;top:168.0px;font-size:9.84px;line-height:11px;white-space:nowrap;color:#444"></div>
<div class="abs" style="left:543px;top:151.5px;font-size:9.84px;line-height:11px;white-space:nowrap;color:#444">&lt;ul&gt;<br>&lt;li&gt;Adjust to 5<br>Positions from a Low<br>Lying ...</div>
<div class="abs" style="left:648px;top:168.0px;font-size:9.84px;line-height:11px;white-space:nowrap;color:#444">8449.jpg</div>
<div class="abs" style="left:756px;width:65.5px;text-align:right;top:168.0px;font-size:9.84px;line-height:11px;white-space:nowrap;color:#444">2599</div>
<div class="abs" style="left:831px;width:118.5px;text-align:right;top:168.0px;font-size:9.84px;line-height:11px;white-space:nowrap;color:#444">1049</div>
<div class="abs" style="left:963px;top:168.0px;font-size:9.84px;line-height:11px;white-space:nowrap;font-style:italic;color:#7d7d7d">NULL</div>
<div class="abs" style="left:1046px;top:168.0px;font-size:9.84px;line-height:11px;white-space:nowrap;font-style:italic;color:#7d7d7d">NULL</div>
<div class="abs" style="left:1093px;width:89.5px;text-align:right;top:168.0px;font-size:9.84px;line-height:11px;white-space:nowrap;color:#444">1</div>
<div class="abs" style="left:1192px;width:80.5px;text-align:right;top:168.0px;font-size:9.84px;line-height:11px;white-space:nowrap;color:#444">20</div>
<div class="abs" style="left:1286px;top:168.0px;font-size:9.84px;line-height:11px;white-space:nowrap;color:#444">1234567890</div>
<div class="abs" style="left:2px;top:202px;width:1347px;height:46px;background:#fff"></div>
<div class="abs" style="left:2px;top:220.0px;width:10px;height:11px"><svg width="10" height="11" viewBox="0 0 10 11"><rect x="0" y="0" width="4" height="11" fill="#d0d0d0"/><path d="M0 0.5H4M0 3H3M0 8H3M0 10.5H4" stroke="#222" stroke-width="1"/><path d="M3 2.5L3.9 4.6L6 5.5L3.9 6.4L3 8.5L2.1 6.4L0 5.5L2.1 4.6Z" fill="#6c63e0"/><rect x="7" y="3.5" width="3" height="4" fill="#f5c400" stroke="#222" stroke-width="1"/><circle cx="9" cy="0.8" r="0.8" fill="#8a7ff0"/></svg></div>
<div class="abs" style="left:14px;top:218.5px;font-size:9.84px;color:#235a81">Copy</div>
<div class="abs" style="left:44px;top:220.0px;width:11px;height:11px"><svg width="11" height="11" viewBox="0 0 11 11"><defs><radialGradient id="dg" cx=".4" cy=".35" r=".7"><stop offset="0" stop-color="#f47a6e"/><stop offset="1" stop-color="#d9372b"/></radialGradient></defs><circle cx="5.5" cy="5.5" r="5.1" fill="url(#dg)"/><circle cx="5.5" cy="5.5" r="3.9" fill="none" stroke="#f9b5ae" stroke-width=".7" stroke-dasharray="1 .6"/><rect x="2.8" y="4.6" width="5.4" height="1.9" rx=".5" fill="#fff"/></svg></div>
<div class="abs" style="left:58px;top:218.5px;font-size:9.84px;color:#235a81">Delete</div>
<div class="abs" style="left:88px;width:51.5px;text-align:right;top:219.5px;font-size:9.84px;line-height:11px;white-space:nowrap;color:#444">22</div>
<div class="abs" style="left:153px;top:219.5px;font-size:9.84px;line-height:11px;white-space:nowrap;color:#444">1</div>
<div class="abs" style="left:242px;width:64.5px;text-align:right;top:219.5px;font-size:9.84px;line-height:11px;white-space:nowrap;color:#444">1</div>
<div class="abs" style="left:320px;top:219.5px;font-size:9.84px;line-height:11px;white-space:nowrap;color:#444">Ryder BR-500</div>
<div class="abs" style="left:392px;top:219.5px;font-size:9.84px;line-height:11px;white-space:nowrap;font-style:italic;color:#7d7d7d">NULL</div>
<div class="abs" style="left:468px;top:219.5px;font-size:9.84px;line-height:11px;white-space:nowrap;color:#444">ryder-br-500</div>
<div class="abs" style="left:543px;top:203.0px;font-size:9.84px;line-height:11px;white-space:nowrap;color:#444">&lt;ul&gt;<br>&lt;li&gt;Adjust to 5<br>Positions from a Low<br>Lying ...</div>
<div class="abs" style="left:648px;top:219.5px;font-size:9.84px;line-height:11px;white-space:nowrap;color:#444">2052.jpg</div>
<div class="abs" style="left:756px;width:65.5px;text-align:right;top:219.5px;font-size:9.84px;line-height:11px;white-space:nowrap;color:#444">2599</div>
<div class="abs" style="left:831px;width:118.5px;text-align:right;top:219.5px;font-size:9.84px;line-height:11px;white-space:nowrap;color:#444">1099</div>
<div class="abs" style="left:963px;top:219.5px;font-size:9.84px;line-height:11px;white-space:nowrap;font-style:italic;color:#7d7d7d">NULL</div>
<div class="abs" style="left:1046px;top:219.5px;font-size:9.84px;line-height:11px;white-space:nowrap;font-style:italic;color:#7d7d7d">NULL</div>
<div class="abs" style="left:1093px;width:89.5px;text-align:right;top:219.5px;font-size:9.84px;line-height:11px;white-space:nowrap;color:#444">1</div>
<div class="abs" style="left:1192px;width:80.5px;text-align:right;top:219.5px;font-size:9.84px;line-height:11px;white-space:nowrap;color:#444">13</div>
<div class="abs" style="left:1286px;top:219.5px;font-size:9.84px;line-height:11px;white-space:nowrap;color:#444">79989778</div>
<div class="abs" style="left:2px;top:248px;width:1347px;height:35px;background:#dfdfdf"></div>
<div class="abs" style="left:2px;top:260.5px;width:10px;height:11px"><svg width="10" height="11" viewBox="0 0 10 11"><rect x="0" y="0" width="4" height="11" fill="#d0d0d0"/><path d="M0 0.5H4M0 3H3M0 8H3M0 10.5H4" stroke="#222" stroke-width="1"/><path d="M3 2.5L3.9 4.6L6 5.5L3.9 6.4L3 8.5L2.1 6.4L0 5.5L2.1 4.6Z" fill="#6c63e0"/><rect x="7" y="3.5" width="3" height="4" fill="#f5c400" stroke="#222" stroke-width="1"/><circle cx="9" cy="0.8" r="0.8" fill="#8a7ff0"/></svg></div>
<div class="abs" style="left:14px;top:259.0px;font-size:9.84px;color:#235a81">Copy</div>
<div class="abs" style="left:44px;top:260.5px;width:11px;height:11px"><svg width="11" height="11" viewBox="0 0 11 11"><defs><radialGradient id="dg" cx=".4" cy=".35" r=".7"><stop offset="0" stop-color="#f47a6e"/><stop offset="1" stop-color="#d9372b"/></radialGradient></defs><circle cx="5.5" cy="5.5" r="5.1" fill="url(#dg)"/><circle cx="5.5" cy="5.5" r="3.9" fill="none" stroke="#f9b5ae" stroke-width=".7" stroke-dasharray="1 .6"/><rect x="2.8" y="4.6" width="5.4" height="1.9" rx=".5" fill="#fff"/></svg></div>
<div class="abs" style="left:58px;top:259.0px;font-size:9.84px;color:#235a81">Delete</div>
<div class="abs" style="left:88px;width:51.5px;text-align:right;top:260.0px;font-size:9.84px;line-height:11px;white-space:nowrap;color:#444">23</div>
<div class="abs" style="left:153px;top:260.0px;font-size:9.84px;line-height:11px;white-space:nowrap;color:#444">3</div>
<div class="abs" style="left:242px;width:64.5px;text-align:right;top:260.0px;font-size:9.84px;line-height:11px;white-space:nowrap;color:#444">1</div>
<div class="abs" style="left:320px;top:249.0px;font-size:9.84px;line-height:11px;white-space:nowrap;color:#444">Ryder CH-<br>10PC-Grey-<br>Medium</div>
<div class="abs" style="left:392px;top:260.0px;font-size:9.84px;line-height:11px;white-space:nowrap;font-style:italic;color:#7d7d7d">NULL</div>
<div class="abs" style="left:468px;top:254.5px;font-size:9.84px;line-height:11px;white-space:nowrap;color:#444">ryder-ch-10pc-<br>grey-medium</div>
<div class="abs" style="left:543px;top:249.0px;font-size:9.84px;line-height:11px;white-space:nowrap;color:#444">&lt;ul&gt;<br>&lt;li&gt;High strength with<br>special aluminium al...</div>
<div class="abs" style="left:648px;top:260.0px;font-size:9.84px;line-height:11px;white-space:nowrap;color:#444">6219.jpg</div>
<div class="abs" style="left:756px;width:65.5px;text-align:right;top:260.0px;font-size:9.84px;line-height:11px;white-space:nowrap;color:#444">2345</div>
<div class="abs" style="left:831px;width:118.5px;text-align:right;top:260.0px;font-size:9.84px;line-height:11px;white-space:nowrap;color:#444">2100</div>
<div class="abs" style="left:963px;top:260.0px;font-size:9.84px;line-height:11px;white-space:nowrap;font-style:italic;color:#7d7d7d">NULL</div>
<div class="abs" style="left:1046px;top:260.0px;font-size:9.84px;line-height:11px;white-space:nowrap;font-style:italic;color:#7d7d7d">NULL</div>
<div class="abs" style="left:1093px;width:89.5px;text-align:right;top:260.0px;font-size:9.84px;line-height:11px;white-space:nowrap;color:#444">1</div>
<div class="abs" style="left:1192px;width:80.5px;text-align:right;top:260.0px;font-size:9.84px;line-height:11px;white-space:nowrap;color:#444">12</div>
<div class="abs" style="left:1286px;top:260.0px;font-size:9.84px;line-height:11px;white-space:nowrap;color:#444">897616316461</div>
<div class="abs" style="left:2px;top:283px;width:1347px;height:57px;background:#fff"></div>
<div class="abs" style="left:2px;top:306.5px;width:10px;height:11px"><svg width="10" height="11" viewBox="0 0 10 11"><rect x="0" y="0" width="4" height="11" fill="#d0d0d0"/><path d="M0 0.5H4M0 3H3M0 8H3M0 10.5H4" stroke="#222" stroke-width="1"/><path d="M3 2.5L3.9 4.6L6 5.5L3.9 6.4L3 8.5L2.1 6.4L0 5.5L2.1 4.6Z" fill="#6c63e0"/><rect x="7" y="3.5" width="3" height="4" fill="#f5c400" stroke="#222" stroke-width="1"/><circle cx="9" cy="0.8" r="0.8" fill="#8a7ff0"/></svg></div>
<div class="abs" style="left:14px;top:305.0px;font-size:9.84px;color:#235a81">Copy</div>
<div class="abs" style="left:44px;top:306.5px;width:11px;height:11px"><svg width="11" height="11" viewBox="0 0 11 11"><defs><radialGradient id="dg" cx=".4" cy=".35" r=".7"><stop offset="0" stop-color="#f47a6e"/><stop offset="1" stop-color="#d9372b"/></radialGradient></defs><circle cx="5.5" cy="5.5" r="5.1" fill="url(#dg)"/><circle cx="5.5" cy="5.5" r="3.9" fill="none" stroke="#f9b5ae" stroke-width=".7" stroke-dasharray="1 .6"/><rect x="2.8" y="4.6" width="5.4" height="1.9" rx=".5" fill="#fff"/></svg></div>
<div class="abs" style="left:58px;top:305.0px;font-size:9.84px;color:#235a81">Delete</div>
<div class="abs" style="left:88px;width:51.5px;text-align:right;top:306.0px;font-size:9.84px;line-height:11px;white-space:nowrap;color:#444">24</div>
<div class="abs" style="left:153px;top:306.0px;font-size:9.84px;line-height:11px;white-space:nowrap;color:#444">5</div>
<div class="abs" style="left:242px;width:64.5px;text-align:right;top:306.0px;font-size:9.84px;line-height:11px;white-space:nowrap;color:#444">1</div>
<div class="abs" style="left:320px;top:300.5px;font-size:9.84px;line-height:11px;white-space:nowrap;color:#444">Champion 200<br>Mag Diamond</div>
<div class="abs" style="left:392px;top:306.0px;font-size:9.84px;line-height:11px;white-space:nowrap;font-style:italic;color:#7d7d7d">NULL</div>
<div class="abs" style="left:468px;top:300.5px;font-size:9.84px;line-height:11px;white-space:nowrap;color:#444">champion-200-<br>mag-diamond</div>
<div class="abs" style="left:543px;top:284.0px;font-size:9.84px;line-height:11px;white-space:nowrap;color:#444">&lt;ul&gt;<br>&lt;li&gt;BOTH<br>ELECTROMOTOR<br>CONTROLLED AND<br>ATTEND...</div>
<div class="abs" style="left:648px;top:306.0px;font-size:9.84px;line-height:11px;white-space:nowrap;color:#444">2050.jpg</div>
<div class="abs" style="left:756px;width:65.5px;text-align:right;top:306.0px;font-size:9.84px;line-height:11px;white-space:nowrap;color:#444">95000</div>
<div class="abs" style="left:831px;width:118.5px;text-align:right;top:306.0px;font-size:9.84px;line-height:11px;white-space:nowrap;color:#444">58000</div>
<div class="abs" style="left:963px;top:306.0px;font-size:9.84px;line-height:11px;white-space:nowrap;font-style:italic;color:#7d7d7d">NULL</div>
<div class="abs" style="left:1046px;top:306.0px;font-size:9.84px;line-height:11px;white-space:nowrap;font-style:italic;color:#7d7d7d">NULL</div>
<div class="abs" style="left:1093px;width:89.5px;text-align:right;top:306.0px;font-size:9.84px;line-height:11px;white-space:nowrap;color:#444">1</div>
<div class="abs" style="left:1192px;width:80.5px;text-align:right;top:306.0px;font-size:9.84px;line-height:11px;white-space:nowrap;color:#444">18</div>
<div class="abs" style="left:1286px;top:306.0px;font-size:9.84px;line-height:11px;white-space:nowrap;color:#444">43131321654</div>
<div class="abs" style="left:2px;top:340px;width:1347px;height:46px;background:#dfdfdf"></div>
<div class="abs" style="left:2px;top:358.0px;width:10px;height:11px"><svg width="10" height="11" viewBox="0 0 10 11"><rect x="0" y="0" width="4" height="11" fill="#d0d0d0"/><path d="M0 0.5H4M0 3H3M0 8H3M0 10.5H4" stroke="#222" stroke-width="1"/><path d="M3 2.5L3.9 4.6L6 5.5L3.9 6.4L3 8.5L2.1 6.4L0 5.5L2.1 4.6Z" fill="#6c63e0"/><rect x="7" y="3.5" width="3" height="4" fill="#f5c400" stroke="#222" stroke-width="1"/><circle cx="9" cy="0.8" r="0.8" fill="#8a7ff0"/></svg></div>
<div class="abs" style="left:14px;top:356.5px;font-size:9.84px;color:#235a81">Copy</div>
<div class="abs" style="left:44px;top:358.0px;width:11px;height:11px"><svg width="11" height="11" viewBox="0 0 11 11"><defs><radialGradient id="dg" cx=".4" cy=".35" r=".7"><stop offset="0" stop-color="#f47a6e"/><stop offset="1" stop-color="#d9372b"/></radialGradient></defs><circle cx="5.5" cy="5.5" r="5.1" fill="url(#dg)"/><circle cx="5.5" cy="5.5" r="3.9" fill="none" stroke="#f9b5ae" stroke-width=".7" stroke-dasharray="1 .6"/><rect x="2.8" y="4.6" width="5.4" height="1.9" rx=".5" fill="#fff"/></svg></div>
<div class="abs" style="left:58px;top:356.5px;font-size:9.84px;color:#235a81">Delete</div>
<div class="abs" style="left:88px;width:51.5px;text-align:right;top:357.5px;font-size:9.84px;line-height:11px;white-space:nowrap;color:#444">25</div>
<div class="abs" style="left:153px;top:357.5px;font-size:9.84px;line-height:11px;white-space:nowrap;color:#444">2</div>
<div class="abs" style="left:242px;width:64.5px;text-align:right;top:357.5px;font-size:9.84px;line-height:11px;white-space:nowrap;color:#444">1</div>
<div class="abs" style="left:320px;top:357.5px;font-size:9.84px;line-height:11px;white-space:nowrap;color:#444">Rainbow 2C</div>
<div class="abs" style="left:392px;top:357.5px;font-size:9.84px;line-height:11px;white-space:nowrap;font-style:italic;color:#7d7d7d">NULL</div>
<div class="abs" style="left:468px;top:357.5px;font-size:9.84px;line-height:11px;white-space:nowrap;color:#444">rainbow-2c</div>
<div class="abs" style="left:543px;top:341.0px;font-size:9.84px;line-height:11px;white-space:nowrap;color:#444">&lt;ul&gt;<br>&lt;li&gt;It having 110 kg<br>seat weight capacity.<br>...</div>
<div class="abs" style="left:648px;top:357.5px;font-size:9.84px;line-height:11px;white-space:nowrap;color:#444">2613.jpg</div>
<div class="abs" style="left:756px;width:65.5px;text-align:right;top:357.5px;font-size:9.84px;line-height:11px;white-space:nowrap;color:#444">3999</div>
<div class="abs" style="left:831px;width:118.5px;text-align:right;top:357.5px;font-size:9.84px;line-height:11px;white-space:nowrap;color:#444">1500</div>
<div class="abs" style="left:963px;top:357.5px;font-size:9.84px;line-height:11px;white-space:nowrap;font-style:italic;color:#7d7d7d">NULL</div>
<div class="abs" style="left:1046px;top:357.5px;font-size:9.84px;line-height:11px;white-space:nowrap;font-style:italic;color:#7d7d7d">NULL</div>
<div class="abs" style="left:1093px;width:89.5px;text-align:right;top:357.5px;font-size:9.84px;line-height:11px;white-space:nowrap;color:#444">1</div>
<div class="abs" style="left:1192px;width:80.5px;text-align:right;top:357.5px;font-size:9.84px;line-height:11px;white-space:nowrap;color:#444">12</div>
<div class="abs" style="left:1286px;top:357.5px;font-size:9.84px;line-height:11px;white-space:nowrap;color:#444">132131685445</div>
<div class="abs" style="left:2px;top:386px;width:1347px;height:35px;background:#fff"></div>
<div class="abs" style="left:2px;top:398.5px;width:10px;height:11px"><svg width="10" height="11" viewBox="0 0 10 11"><rect x="0" y="0" width="4" height="11" fill="#d0d0d0"/><path d="M0 0.5H4M0 3H3M0 8H3M0 10.5H4" stroke="#222" stroke-width="1"/><path d="M3 2.5L3.9 4.6L6 5.5L3.9 6.4L3 8.5L2.1 6.4L0 5.5L2.1 4.6Z" fill="#6c63e0"/><rect x="7" y="3.5" width="3" height="4" fill="#f5c400" stroke="#222" stroke-width="1"/><circle cx="9" cy="0.8" r="0.8" fill="#8a7ff0"/></svg></div>
<div class="abs" style="left:14px;top:397.0px;font-size:9.84px;color:#235a81">Copy</div>
<div class="abs" style="left:44px;top:398.5px;width:11px;height:11px"><svg width="11" height="11" viewBox="0 0 11 11"><defs><radialGradient id="dg" cx=".4" cy=".35" r=".7"><stop offset="0" stop-color="#f47a6e"/><stop offset="1" stop-color="#d9372b"/></radialGradient></defs><circle cx="5.5" cy="5.5" r="5.1" fill="url(#dg)"/><circle cx="5.5" cy="5.5" r="3.9" fill="none" stroke="#f9b5ae" stroke-width=".7" stroke-dasharray="1 .6"/><rect x="2.8" y="4.6" width="5.4" height="1.9" rx=".5" fill="#fff"/></svg></div>
<div class="abs" style="left:58px;top:397.0px;font-size:9.84px;color:#235a81">Delete</div>
<div class="abs" style="left:88px;width:51.5px;text-align:right;top:398.0px;font-size:9.84px;line-height:11px;white-space:nowrap;color:#444">26</div>
<div class="abs" style="left:153px;top:398.0px;font-size:9.84px;line-height:11px;white-space:nowrap;color:#444">4</div>
<div class="abs" style="left:242px;width:64.5px;text-align:right;top:398.0px;font-size:9.84px;line-height:11px;white-space:nowrap;color:#444">1</div>
<div class="abs" style="left:320px;top:387.0px;font-size:9.84px;line-height:11px;white-space:nowrap;color:#444">VOIS-<br>communication<br>aid</div>
<div class="abs" style="left:392px;top:398.0px;font-size:9.84px;line-height:11px;white-space:nowrap;font-style:italic;color:#7d7d7d">NULL</div>
<div class="abs" style="left:468px;top:387.0px;font-size:9.84px;line-height:11px;white-space:nowrap;color:#444">vois-<br>communication-<br>aid</div>
<div class="abs" style="left:543px;top:387.0px;font-size:9.84px;line-height:11px;white-space:nowrap;color:#444">&lt;p&gt;Product<br>&amp;ldquo;VOIS&amp;rdquo;<br>is a pair of gloves ...</div>
<div class="abs" style="left:648px;top:398.0px;font-size:9.84px;line-height:11px;white-space:nowrap;color:#444">5711.png</div>
<div class="abs" style="left:756px;width:65.5px;text-align:right;top:398.0px;font-size:9.84px;line-height:11px;white-space:nowrap;color:#444">43750</div>
<div class="abs" style="left:831px;width:118.5px;text-align:right;top:398.0px;font-size:9.84px;line-height:11px;white-space:nowrap;color:#444">35500</div>
<div class="abs" style="left:963px;top:398.0px;font-size:9.84px;line-height:11px;white-space:nowrap;font-style:italic;color:#7d7d7d">NULL</div>
<div class="abs" style="left:1046px;top:398.0px;font-size:9.84px;line-height:11px;white-space:nowrap;font-style:italic;color:#7d7d7d">NULL</div>
<div class="abs" style="left:1093px;width:89.5px;text-align:right;top:398.0px;font-size:9.84px;line-height:11px;white-space:nowrap;color:#444">1</div>
<div class="abs" style="left:1192px;width:80.5px;text-align:right;top:398.0px;font-size:9.84px;line-height:11px;white-space:nowrap;color:#444">20</div>
<div class="abs" style="left:1286px;top:398.0px;font-size:9.84px;line-height:11px;white-space:nowrap;color:#444">12423436343</div>
<div class="abs" style="left:2px;top:421px;width:1347px;height:35px;background:#dfdfdf"></div>
<div class="abs" style="left:2px;top:433.5px;width:10px;height:11px"><svg width="10" height="11" viewBox="0 0 10 11"><rect x="0" y="0" width="4" height="11" fill="#d0d0d0"/><path d="M0 0.5H4M0 3H3M0 8H3M0 10.5H4" stroke="#222" stroke-width="1"/><path d="M3 2.5L3.9 4.6L6 5.5L3.9 6.4L3 8.5L2.1 6.4L0 5.5L2.1 4.6Z" fill="#6c63e0"/><rect x="7" y="3.5" width="3" height="4" fill="#f5c400" stroke="#222" stroke-width="1"/><circle cx="9" cy="0.8" r="0.8" fill="#8a7ff0"/></svg></div>
<div class="abs" style="left:14px;top:432.0px;font-size:9.84px;color:#235a81">Copy</div>
<div class="abs" style="left:44px;top:433.5px;width:11px;height:11px"><svg width="11" height="11" viewBox="0 0 11 11"><defs><radialGradient id="dg" cx=".4" cy=".35" r=".7"><stop offset="0" stop-color="#f47a6e"/><stop offset="1" stop-color="#d9372b"/></radialGradient></defs><circle cx="5.5" cy="5.5" r="5.1" fill="url(#dg)"/><circle cx="5.5" cy="5.5" r="3.9" fill="none" stroke="#f9b5ae" stroke-width=".7" stroke-dasharray="1 .6"/><rect x="2.8" y="4.6" width="5.4" height="1.9" rx=".5" fill="#fff"/></svg></div>
<div class="abs" style="left:58px;top:432.0px;font-size:9.84px;color:#235a81">Delete</div>
<div class="abs" style="left:88px;width:51.5px;text-align:right;top:433.0px;font-size:9.84px;line-height:11px;white-space:nowrap;color:#444">27</div>
<div class="abs" style="left:153px;top:433.0px;font-size:9.84px;line-height:11px;white-space:nowrap;color:#444">7</div>
<div class="abs" style="left:242px;width:64.5px;text-align:right;top:433.0px;font-size:9.84px;line-height:11px;white-space:nowrap;color:#444">1</div>
<div class="abs" style="left:320px;top:433.0px;font-size:9.84px;line-height:11px;white-space:nowrap;color:#444">Test Chairs</div>
<div class="abs" style="left:392px;top:433.0px;font-size:9.84px;line-height:11px;white-space:nowrap;font-style:italic;color:#7d7d7d">NULL</div>
<div class="abs" style="left:468px;top:433.0px;font-size:9.84px;line-height:11px;white-space:nowrap;color:#444">test-chairs</div>
<div class="abs" style="left:543px;top:422.0px;font-size:9.84px;line-height:11px;white-space:nowrap;color:#444">&lt;p&gt;Loreum ipsum<br>loreum ipsum loreum<br>ipsumLoreum ip...</div>
<div class="abs" style="left:648px;top:433.0px;font-size:9.84px;line-height:11px;white-space:nowrap;color:#444">6100.jpg</div>
<div class="abs" style="left:756px;width:65.5px;text-align:right;top:433.0px;font-size:9.84px;line-height:11px;white-space:nowrap;color:#444">20000</div>
<div class="abs" style="left:831px;width:118.5px;text-align:right;top:433.0px;font-size:9.84px;line-height:11px;white-space:nowrap;color:#444">15000</div>
<div class="abs" style="left:963px;top:433.0px;font-size:9.84px;line-height:11px;white-space:nowrap;font-style:italic;color:#7d7d7d">NULL</div>
<div class="abs" style="left:1046px;top:433.0px;font-size:9.84px;line-height:11px;white-space:nowrap;font-style:italic;color:#7d7d7d">NULL</div>
<div class="abs" style="left:1093px;width:89.5px;text-align:right;top:433.0px;font-size:9.84px;line-height:11px;white-space:nowrap;color:#444">1</div>
<div class="abs" style="left:1192px;width:80.5px;text-align:right;top:433.0px;font-size:9.84px;line-height:11px;white-space:nowrap;color:#444">11</div>
<div class="abs" style="left:1286px;top:433.0px;font-size:9.84px;line-height:11px;white-space:nowrap;color:#444">648732648736</div>
<div class="abs" style="left:2px;top:456px;width:1347px;height:20px;background:#fff"></div>
<div class="abs" style="left:2px;top:461.0px;width:10px;height:11px"><svg width="10" height="11" viewBox="0 0 10 11"><rect x="0" y="0" width="4" height="11" fill="#d0d0d0"/><path d="M0 0.5H4M0 3H3M0 8H3M0 10.5H4" stroke="#222" stroke-width="1"/><path d="M3 2.5L3.9 4.6L6 5.5L3.9 6.4L3 8.5L2.1 6.4L0 5.5L2.1 4.6Z" fill="#6c63e0"/><rect x="7" y="3.5" width="3" height="4" fill="#f5c400" stroke="#222" stroke-width="1"/><circle cx="9" cy="0.8" r="0.8" fill="#8a7ff0"/></svg></div>
<div class="abs" style="left:14px;top:459.5px;font-size:9.84px;color:#235a81">Copy</div>
<div class="abs" style="left:44px;top:461.0px;width:11px;height:11px"><svg width="11" height="11" viewBox="0 0 11 11"><defs><radialGradient id="dg" cx=".4" cy=".35" r=".7"><stop offset="0" stop-color="#f47a6e"/><stop offset="1" stop-color="#d9372b"/></radialGradient></defs><circle cx="5.5" cy="5.5" r="5.1" fill="url(#dg)"/><circle cx="5.5" cy="5.5" r="3.9" fill="none" stroke="#f9b5ae" stroke-width=".7" stroke-dasharray="1 .6"/><rect x="2.8" y="4.6" width="5.4" height="1.9" rx=".5" fill="#fff"/></svg></div>
<div class="abs" style="left:58px;top:459.5px;font-size:9.84px;color:#235a81">Delete</div>
<div class="abs" style="left:88px;width:51.5px;text-align:right;top:460.5px;font-size:9.84px;line-height:11px;white-space:nowrap;color:#444">28</div>
<div class="abs" style="left:153px;top:460.5px;font-size:9.84px;line-height:11px;white-space:nowrap;color:#444">10</div>
<div class="abs" style="left:242px;width:64.5px;text-align:right;top:460.5px;font-size:9.84px;line-height:11px;white-space:nowrap;color:#444">1</div>
<div class="abs" style="left:320px;top:460.5px;font-size:9.84px;line-height:11px;white-space:nowrap;color:#444">Test</div>
<div class="abs" style="left:392px;top:460.5px;font-size:9.84px;line-height:11px;white-space:nowrap;font-style:italic;color:#7d7d7d">NULL</div>
<div class="abs" style="left:468px;top:460.5px;font-size:9.84px;line-height:11px;white-space:nowrap;color:#444"></div>
<div class="abs" style="left:543px;top:460.5px;font-size:9.84px;line-height:11px;white-space:nowrap;color:#444">&lt;p&gt;Test&lt;/p&gt;</div>
<div class="abs" style="left:648px;top:460.5px;font-size:9.84px;line-height:11px;white-space:nowrap;color:#444">1097.png</div>
<div class="abs" style="left:756px;width:65.5px;text-align:right;top:460.5px;font-size:9.84px;line-height:11px;white-space:nowrap;color:#444">10000</div>
<div class="abs" style="left:831px;width:118.5px;text-align:right;top:460.5px;font-size:9.84px;line-height:11px;white-space:nowrap;color:#444">500</div>
<div class="abs" style="left:963px;top:460.5px;font-size:9.84px;line-height:11px;white-space:nowrap;font-style:italic;color:#7d7d7d">NULL</div>
<div class="abs" style="left:1046px;top:460.5px;font-size:9.84px;line-height:11px;white-space:nowrap;font-style:italic;color:#7d7d7d">NULL</div>
<div class="abs" style="left:1093px;width:89.5px;text-align:right;top:460.5px;font-size:9.84px;line-height:11px;white-space:nowrap;color:#444">1</div>
<div class="abs" style="left:1192px;width:80.5px;text-align:right;top:460.5px;font-size:9.84px;line-height:11px;white-space:nowrap;color:#444">20</div>
<div class="abs" style="left:1286px;top:460.5px;font-size:9.84px;line-height:11px;white-space:nowrap;color:#444">10</div>
<div class="abs" style="left:2px;top:476px;width:1347px;height:21px;background:#dfdfdf"></div>
<div class="abs" style="left:2px;top:481.5px;width:10px;height:11px"><svg width="10" height="11" viewBox="0 0 10 11"><rect x="0" y="0" width="4" height="11" fill="#d0d0d0"/><path d="M0 0.5H4M0 3H3M0 8H3M0 10.5H4" stroke="#222" stroke-width="1"/><path d="M3 2.5L3.9 4.6L6 5.5L3.9 6.4L3 8.5L2.1 6.4L0 5.5L2.1 4.6Z" fill="#6c63e0"/><rect x="7" y="3.5" width="3" height="4" fill="#f5c400" stroke="#222" stroke-width="1"/><circle cx="9" cy="0.8" r="0.8" fill="#8a7ff0"/></svg></div>
<div class="abs" style="left:14px;top:480.0px;font-size:9.84px;color:#235a81">Copy</div>
<div class="abs" style="left:44px;top:481.5px;width:11px;height:11px"><svg width="11" height="11" viewBox="0 0 11 11"><defs><radialGradient id="dg" cx=".4" cy=".35" r=".7"><stop offset="0" stop-color="#f47a6e"/><stop offset="1" stop-color="#d9372b"/></radialGradient></defs><circle cx="5.5" cy="5.5" r="5.1" fill="url(#dg)"/><circle cx="5.5" cy="5.5" r="3.9" fill="none" stroke="#f9b5ae" stroke-width=".7" stroke-dasharray="1 .6"/><rect x="2.8" y="4.6" width="5.4" height="1.9" rx=".5" fill="#fff"/></svg></div>
<div class="abs" style="left:58px;top:480.0px;font-size:9.84px;color:#235a81">Delete</div>
<div class="abs" style="left:88px;width:51.5px;text-align:right;top:481.0px;font-size:9.84px;line-height:11px;white-space:nowrap;color:#444">29</div>
<div class="abs" style="left:153px;top:481.0px;font-size:9.84px;line-height:11px;white-space:nowrap;color:#444">10</div>
<div class="abs" style="left:242px;width:64.5px;text-align:right;top:481.0px;font-size:9.84px;line-height:11px;white-space:nowrap;color:#444">1</div>
<div class="abs" style="left:320px;top:481.0px;font-size:9.84px;line-height:11px;white-space:nowrap;color:#444">Test132</div>
<div class="abs" style="left:392px;top:481.0px;font-size:9.84px;line-height:11px;white-space:nowrap;font-style:italic;color:#7d7d7d">NULL</div>
<div class="abs" style="left:468px;top:481.0px;font-size:9.84px;line-height:11px;white-space:nowrap;color:#444"></div>
<div class="abs" style="left:543px;top:481.0px;font-size:9.84px;line-height:11px;white-space:nowrap;color:#444">&lt;p&gt;Test data&lt;/p&gt;</div>
<div class="abs" style="left:648px;top:481.0px;font-size:9.84px;line-height:11px;white-space:nowrap;color:#444">5000.png</div>
<div class="abs" style="left:756px;width:65.5px;text-align:right;top:481.0px;font-size:9.84px;line-height:11px;white-space:nowrap;color:#444">500</div>
<div class="abs" style="left:831px;width:118.5px;text-align:right;top:481.0px;font-size:9.84px;line-height:11px;white-space:nowrap;color:#444">400</div>
<div class="abs" style="left:963px;top:481.0px;font-size:9.84px;line-height:11px;white-space:nowrap;font-style:italic;color:#7d7d7d">NULL</div>
<div class="abs" style="left:1046px;top:481.0px;font-size:9.84px;line-height:11px;white-space:nowrap;font-style:italic;color:#7d7d7d">NULL</div>
<div class="abs" style="left:1093px;width:89.5px;text-align:right;top:481.0px;font-size:9.84px;line-height:11px;white-space:nowrap;color:#444">1</div>
<div class="abs" style="left:1192px;width:80.5px;text-align:right;top:481.0px;font-size:9.84px;line-height:11px;white-space:nowrap;color:#444">20</div>
<div class="abs" style="left:1286px;top:481.0px;font-size:9.84px;line-height:11px;white-space:nowrap;color:#444">555</div>
<div class="abs" style="left:2px;top:497px;width:1347px;height:21px;background:#fff"></div>
<div class="abs" style="left:2px;top:502.5px;width:10px;height:11px"><svg width="10" height="11" viewBox="0 0 10 11"><rect x="0" y="0" width="4" height="11" fill="#d0d0d0"/><path d="M0 0.5H4M0 3H3M0 8H3M0 10.5H4" stroke="#222" stroke-width="1"/><path d="M3 2.5L3.9 4.6L6 5.5L3.9 6.4L3 8.5L2.1 6.4L0 5.5L2.1 4.6Z" fill="#6c63e0"/><rect x="7" y="3.5" width="3" height="4" fill="#f5c400" stroke="#222" stroke-width="1"/><circle cx="9" cy="0.8" r="0.8" fill="#8a7ff0"/></svg></div>
<div class="abs" style="left:14px;top:501.0px;font-size:9.84px;color:#235a81">Copy</div>
<div class="abs" style="left:44px;top:502.5px;width:11px;height:11px"><svg width="11" height="11" viewBox="0 0 11 11"><defs><radialGradient id="dg" cx=".4" cy=".35" r=".7"><stop offset="0" stop-color="#f47a6e"/><stop offset="1" stop-color="#d9372b"/></radialGradient></defs><circle cx="5.5" cy="5.5" r="5.1" fill="url(#dg)"/><circle cx="5.5" cy="5.5" r="3.9" fill="none" stroke="#f9b5ae" stroke-width=".7" stroke-dasharray="1 .6"/><rect x="2.8" y="4.6" width="5.4" height="1.9" rx=".5" fill="#fff"/></svg></div>
<div class="abs" style="left:58px;top:501.0px;font-size:9.84px;color:#235a81">Delete</div>
<div class="abs" style="left:88px;width:51.5px;text-align:right;top:502.0px;font-size:9.84px;line-height:11px;white-space:nowrap;color:#444">30</div>
<div class="abs" style="left:153px;top:502.0px;font-size:9.84px;line-height:11px;white-space:nowrap;color:#444">1</div>
<div class="abs" style="left:242px;width:64.5px;text-align:right;top:502.0px;font-size:9.84px;line-height:11px;white-space:nowrap;color:#444">1</div>
<div class="abs" style="left:320px;top:502.0px;font-size:9.84px;line-height:11px;white-space:nowrap;color:#444">aaa</div>
<div class="abs" style="left:392px;top:502.0px;font-size:9.84px;line-height:11px;white-space:nowrap;font-style:italic;color:#7d7d7d">NULL</div>
<div class="abs" style="left:468px;top:502.0px;font-size:9.84px;line-height:11px;white-space:nowrap;color:#444"></div>
<div class="abs" style="left:543px;top:502.0px;font-size:9.84px;line-height:11px;white-space:nowrap;color:#444">&lt;p&gt;fjhhk&lt;/p&gt;</div>
<div class="abs" style="left:648px;top:502.0px;font-size:9.84px;line-height:11px;white-space:nowrap;color:#444">5502.jpg</div>
<div class="abs" style="left:756px;width:65.5px;text-align:right;top:502.0px;font-size:9.84px;line-height:11px;white-space:nowrap;color:#444">423</div>
<div class="abs" style="left:831px;width:118.5px;text-align:right;top:502.0px;font-size:9.84px;line-height:11px;white-space:nowrap;color:#444">676</div>
<div class="abs" style="left:963px;top:502.0px;font-size:9.84px;line-height:11px;white-space:nowrap;font-style:italic;color:#7d7d7d">NULL</div>
<div class="abs" style="left:1046px;top:502.0px;font-size:9.84px;line-height:11px;white-space:nowrap;font-style:italic;color:#7d7d7d">NULL</div>
<div class="abs" style="left:1093px;width:89.5px;text-align:right;top:502.0px;font-size:9.84px;line-height:11px;white-space:nowrap;color:#444">1</div>
<div class="abs" style="left:1192px;width:80.5px;text-align:right;top:502.0px;font-size:9.84px;line-height:11px;white-space:nowrap;color:#444">43</div>
<div class="abs" style="left:1286px;top:502.0px;font-size:9.84px;line-height:11px;white-space:nowrap;color:#444">565776776</div>
<div class="abs" style="left:-0.5px;top:531.0px;font-size:9.84px;color:#235a81">heck all</div>
<div class="abs" style="left:56px;top:531.0px;font-size:9.84px;font-style:italic;color:#444">With selected:</div>
<div class="abs" style="left:128px;top:531px;width:12px;height:12px"><svg width="12" height="12" viewBox="0 0 12 12"><path d="M3 11L1 11.5L1.5 9.3Z" fill="#c8684a"/><path d="M1.5 9.3L8.8 2L10.9 4.1L3.6 11.4Z" fill="#f6c445" stroke="#c08a1a" stroke-width=".7"/><path d="M8.8 2L9.8 1A1 1 0 0 1 11.9 3.1L10.9 4.1Z" fill="#e9a0a0" stroke="#c08a1a" stroke-width=".6"/></svg></div>
<div class="abs" style="left:143px;top:531.0px;font-size:9.84px;color:#235a81">Edit</div>
<div class="abs" style="left:175px;top:533px;width:10px;height:11px"><svg width="10" height="11" viewBox="0 0 10 11"><rect x="0" y="0" width="4" height="11" fill="#d0d0d0"/><path d="M0 0.5H4M0 3H3M0 8H3M0 10.5H4" stroke="#222" stroke-width="1"/><path d="M3 2.5L3.9 4.6L6 5.5L3.9 6.4L3 8.5L2.1 6.4L0 5.5L2.1 4.6Z" fill="#6c63e0"/><rect x="7" y="3.5" width="3" height="4" fill="#f5c400" stroke="#222" stroke-width="1"/><circle cx="9" cy="0.8" r="0.8" fill="#8a7ff0"/></svg></div>
<div class="abs" style="left:189px;top:531.0px;font-size:9.84px;color:#235a81">Copy</div>
<div class="abs" style="left:228px;top:532.5px;width:11px;height:11px"><svg width="11" height="11" viewBox="0 0 11 11"><defs><radialGradient id="dg" cx=".4" cy=".35" r=".7"><stop offset="0" stop-color="#f47a6e"/><stop offset="1" stop-color="#d9372b"/></radialGradient></defs><circle cx="5.5" cy="5.5" r="5.1" fill="url(#dg)"/><circle cx="5.5" cy="5.5" r="3.9" fill="none" stroke="#f9b5ae" stroke-width=".7" stroke-dasharray="1 .6"/><rect x="2.8" y="4.6" width="5.4" height="1.9" rx=".5" fill="#fff"/></svg></div>
<div class="abs" style="left:242px;top:531.0px;font-size:9.84px;color:#235a81">Delete</div>
<div class="abs" style="left:286px;top:531px;width:12px;height:12px"><svg width="12" height="12" viewBox="0 0 12 12"><rect x="0.5" y="1.5" width="11" height="9" fill="#eef" stroke="#4a7" stroke-width="1"/><path d="M2 4H10M2 6H10" stroke="#8ab" stroke-width=".8"/><path d="M1 9H11" stroke="#3a5" stroke-width="1.5"/></svg></div>
<div class="abs" style="left:300px;top:531.0px;font-size:9.84px;color:#235a81">Export</div>
<div class="abs" style="left:0px;top:573px;font-size:9.84px;color:#235a81">all</div>
<div class="abs" style="left:19px;top:571px;width:1px;height:14px;background:#e6b884"></div>
<div class="abs" style="left:28px;top:573px;font-size:9.84px;color:#444">Number of rows:</div>
<div class="abs" style="left:108px;top:569.5px;width:44px;height:17.5px;border:1px solid #a9a9a9;border-radius:1px;background:#fff"></div>
<div class="abs" style="left:114px;top:573px;font-size:9.84px;color:#222">25</div>
<svg class="abs" style="left:137px;top:575px" width="10" height="7" viewBox="0 0 10 7"><path d="M1 1.2L5 5.2L9 1.2" fill="none" stroke="#222" stroke-width="2"/></svg>
<div class="abs" style="left:177px;top:573px;font-size:9.84px;color:#444">Filter rows:</div>
<div class="abs" style="left:230px;top:569px;width:129px;height:18.5px;border:1px solid #a9a9a9;border-radius:1px;background:#fff"></div>
<div class="abs" style="left:234px;top:573px;font-size:9.84px;color:#777">Search this table</div>
<div class="abs" style="left:363px;top:573px;font-size:9.84px;color:#444">Sort by key:</div>
<div class="abs" style="left:426px;top:569.5px;width:108px;height:17.5px;border:1px solid #a9a9a9;border-radius:1px;background:#fff"></div>
<div class="abs" style="left:432px;top:573px;font-size:9.84px;color:#222">None</div>
<svg class="abs" style="left:518px;top:575px" width="10" height="7" viewBox="0 0 10 7"><path d="M1 1.2L5 5.2L9 1.2" fill="none" stroke="#222" stroke-width="2"/></svg>
<div class="abs" style="left:62px;top:589px;width:120px;height:13px;background:linear-gradient(90deg,rgba(0,0,0,.025),rgba(0,0,0,0))"></div>
<div class="abs" style="left:2px;top:589px;width:60px;height:14px;background:#cfcfcf;border-top:1px solid #aaa;border-right:1px solid #bbb;border-radius:0 3px 0 0"></div>
<div class="abs" style="left:9px;top:592px;width:8px;height:9px;background:linear-gradient(#fff 0,#fff 20%,#222 20%,#444 100%)"></div>
<div class="abs" style="left:23px;top:590.8px;font-size:9.84px;color:#333">Console</div></div>
<div class="abs" style="left:1349px;top:109px;width:17px;height:602px;background:#f1f1f1"></div>
<svg class="abs" style="left:1353px;top:115px" width="9" height="6" viewBox="0 0 9 6"><path d="M0.8 5L4.5 1L8.2 5Z" fill="#505050"/></svg>
<div class="abs" style="left:1351px;top:174px;width:13px;height:390px;background:#c1c1c1"></div>
<svg class="abs" style="left:1353px;top:699px" width="9" height="6" viewBox="0 0 9 6"><path d="M0.8 1L4.5 5L8.2 1Z" fill="#505050"/></svg>
<div class="abs" style="left:0;top:711px;width:1349px;height:17px;background:#f1f1f1"></div>
<div class="abs" style="left:1349px;top:711px;width:17px;height:17px;background:#dcdcdc"></div>
<svg class="abs" style="left:4px;top:715px" width="8" height="10" viewBox="0 0 8 10"><path d="M6.5 1L1.5 5L6.5 9Z" fill="#505050"/></svg>
<div class="abs" style="left:54px;top:713px;width:707px;height:13px;background:#c1c1c1"></div>
<svg class="abs" style="left:1337px;top:715px" width="8" height="10" viewBox="0 0 8 10"><path d="M1.5 1L6.5 5L1.5 9Z" fill="#505050"/></svg>
<div class="abs" style="left:931px;top:72px;width:327px;height:48px;background:#fff;border-radius:5px;box-shadow:0 1px 3px rgba(0,0,0,.35)"></div>
<div class="abs" style="left:947px;top:89.5px;font-size:11.5px;color:#222;white-space:nowrap">fx_shipping_address</div>
<div class="abs" style="left:1111px;top:89.5px;font-size:11.5px;color:#555;white-space:nowrap">0/0</div>
<div class="abs" style="left:1145px;top:80px;width:1px;height:32px;background:#ddd"></div>
<svg class="abs" style="left:1163px;top:91px" width="13" height="8" viewBox="0 0 13 8"><path d="M1 7L6.5 1.5L12 7" fill="none" stroke="#999" stroke-width="1.5"/></svg>
<svg class="abs" style="left:1195px;top:92px" width="13" height="8" viewBox="0 0 13 8"><path d="M1 1L6.5 6.5L12 1" fill="none" stroke="#999" stroke-width="1.5"/></svg>
<svg class="abs" style="left:1228px;top:90px" width="12" height="12" viewBox="0 0 12 12"><path d="M1 1L11 11M11 1L1 11" stroke="#333" stroke-width="1.8"/></svg>
<div class="abs" style="left:0;top:728px;width:1366px;height:40px;background:linear-gradient(90deg,#d3e6f2 0%,#d6e5f1 40%,#dae3ee 100%)"></div>
<div class="abs" style="left:1361px;top:728px;width:1px;height:40px;background:#a9b6c2"></div>
<svg class="abs" style="left:16px;top:740px" width="16" height="16" viewBox="0 0 16 16"><path d="M0 2.2L6.5 1.3V7.5H0ZM7.5 1.1L16 0V7.5H7.5ZM0 8.5H6.5V14.7L0 13.8ZM7.5 8.5H16V16L7.5 14.9Z" fill="#111"/></svg>
<div class="abs" style="left:48px;top:728px;width:287px;height:40px;background:#fff;border:1px solid #d0d0d0;border-bottom:none"></div>
<svg class="abs" style="left:59px;top:739px" width="18" height="18" viewBox="0 0 18 18"><circle cx="11" cy="7" r="5.3" fill="none" stroke="#222" stroke-width="1.4"/><path d="M7.2 10.8L1 17" stroke="#222" stroke-width="1.5"/></svg>
<div class="abs" style="left:88px;top:740.5px;font-size:14.5px;color:#222;white-space:nowrap">Type here to search</div>
<svg class="abs" style="left:255px;top:728px" width="80" height="40" viewBox="0 0 80 40"><path d="M30 24L47 40M33 22L42 38M38 16L41 34M25 30L36 40" stroke="#8bb060" stroke-width="1.2" fill="none"/><circle cx="40" cy="24" r="3" fill="#5f9a4c"/><circle cx="24" cy="35" r="3.2" fill="#4f8a3c"/><g fill="#a497ee" opacity="0.85"><ellipse cx="20" cy="4.7749999999999995" rx="1.62" ry="4.75" transform="rotate(0.0 20 10)"/><ellipse cx="20" cy="4.7749999999999995" rx="1.62" ry="4.75" transform="rotate(25.7 20 10)"/><ellipse cx="20" cy="4.7749999999999995" rx="1.62" ry="4.75" transform="rotate(51.4 20 10)"/><ellipse cx="20" cy="4.7749999999999995" rx="1.62" ry="4.75" transform="rotate(77.1 20 10)"/><ellipse cx="20" cy="4.7749999999999995" rx="1.62" ry="4.75" transform="rotate(102.9 20 10)"/><ellipse cx="20" cy="4.7749999999999995" rx="1.62" ry="4.75" transform="rotate(128.6 20 10)"/><ellipse cx="20" cy="4.7749999999999995" rx="1.62" ry="4.75" transform="rotate(154.3 20 10)"/><ellipse cx="20" cy="4.7749999999999995" rx="1.62" ry="4.75" transform="rotate(180.0 20 10)"/><ellipse cx="20" cy="4.7749999999999995" rx="1.62" ry="4.75" transform="rotate(205.7 20 10)"/><ellipse cx="20" cy="4.7749999999999995" rx="1.62" ry="4.75" transform="rotate(231.4 20 10)"/><ellipse cx="20" cy="4.7749999999999995" rx="1.62" ry="4.75" transform="rotate(257.1 20 10)"/><ellipse cx="20" cy="4.7749999999999995" rx="1.62" ry="4.75" transform="rotate(282.9 20 10)"/><ellipse cx="20" cy="4.7749999999999995" rx="1.62" ry="4.75" transform="rotate(308.6 20 10)"/><ellipse cx="20" cy="4.7749999999999995" rx="1.62" ry="4.75" transform="rotate(334.3 20 10)"/><ellipse cx="33.5" cy="9.6" rx="1.36" ry="4.00" transform="rotate(0.0 33.5 14)"/><ellipse cx="33.5" cy="9.6" rx="1.36" ry="4.00" transform="rotate(25.7 33.5 14)"/><ellipse cx="33.5" cy="9.6" rx="1.36" ry="4.00" transform="rotate(51.4 33.5 14)"/><ellipse cx="33.5" cy="9.6" rx="1.36" ry="4.00" transform="rotate(77.1 33.5 14)"/><ellipse cx="33.5" cy="9.6" rx="1.36" ry="4.00" transform="rotate(102.9 33.5 14)"/><ellipse cx="33.5" cy="9.6" rx="1.36" ry="4.00" transform="rotate(128.6 33.5 14)"/><ellipse cx="33.5" cy="9.6" rx="1.36" ry="4.00" transform="rotate(154.3 33.5 14)"/><ellipse cx="33.5" cy="9.6" rx="1.36" ry="4.00" transform="rotate(180.0 33.5 14)"/><ellipse cx="33.5" cy="9.6" rx="1.36" ry="4.00" transform="rotate(205.7 33.5 14)"/><ellipse cx="33.5" cy="9.6" rx="1.36" ry="4.00" transform="rotate(231.4 33.5 14)"/><ellipse cx="33.5" cy="9.6" rx="1.36" ry="4.00" transform="rotate(257.1 33.5 14)"/><ellipse cx="33.5" cy="9.6" rx="1.36" ry="4.00" transform="rotate(282.9 33.5 14)"/><ellipse cx="33.5" cy="9.6" rx="1.36" ry="4.00" transform="rotate(308.6 33.5 14)"/><ellipse cx="33.5" cy="9.6" rx="1.36" ry="4.00" transform="rotate(334.3 33.5 14)"/><ellipse cx="22" cy="19.05" rx="1.53" ry="4.50" transform="rotate(0.0 22 24)"/><ellipse cx="22" cy="19.05" rx="1.53" ry="4.50" transform="rotate(25.7 22 24)"/><ellipse cx="22" cy="19.05" rx="1.53" ry="4.50" transform="rotate(51.4 22 24)"/><ellipse cx="22" cy="19.05" rx="1.53" ry="4.50" transform="rotate(77.1 22 24)"/><ellipse cx="22" cy="19.05" rx="1.53" ry="4.50" transform="rotate(102.9 22 24)"/><ellipse cx="22" cy="19.05" rx="1.53" ry="4.50" transform="rotate(128.6 22 24)"/><ellipse cx="22" cy="19.05" rx="1.53" ry="4.50" transform="rotate(154.3 22 24)"/><ellipse cx="22" cy="19.05" rx="1.53" ry="4.50" transform="rotate(180.0 22 24)"/><ellipse cx="22" cy="19.05" rx="1.53" ry="4.50" transform="rotate(205.7 22 24)"/><ellipse cx="22" cy="19.05" rx="1.53" ry="4.50" transform="rotate(231.4 22 24)"/><ellipse cx="22" cy="19.05" rx="1.53" ry="4.50" transform="rotate(257.1 22 24)"/><ellipse cx="22" cy="19.05" rx="1.53" ry="4.50" transform="rotate(282.9 22 24)"/><ellipse cx="22" cy="19.05" rx="1.53" ry="4.50" transform="rotate(308.6 22 24)"/><ellipse cx="22" cy="19.05" rx="1.53" ry="4.50" transform="rotate(334.3 22 24)"/></g><g fill="#e6a620"><ellipse cx="20" cy="10" rx="2.6" ry="1.8"/><ellipse cx="33.5" cy="14" rx="2.4" ry="1.3"/><ellipse cx="22" cy="24" rx="2.8" ry="2"/></g><path d="M49 11L54 6H64L67 10L62 16H54Z" fill="#3d8ff0"/><path d="M53 9L58 7L63 9L58 13Z" fill="#8fc6ff" opacity=".6"/><path d="M50 26L55 19H66L71 24L68 33L58 35L51 32Z" fill="#3a7fe8"/><ellipse cx="61" cy="24" rx="5" ry="3" fill="#9bd0ff" opacity=".55"/></svg>
<svg class="abs" style="left:352px;top:740px" width="17" height="16" viewBox="0 0 17 16"><rect x="2.5" y="3.5" width="9" height="9" fill="none" stroke="#111" stroke-width="1.3"/><path d="M0 1H12M0 15H12" stroke="#111" stroke-width="1.3"/><rect x="14" y="1" width="2.5" height="2.5" fill="#111"/><rect x="14" y="6.5" width="2.5" height="2.5" fill="#111"/><rect x="14" y="12" width="2.5" height="2.5" fill="#111"/></svg>
<div class="abs" style="left:583px;top:728px;width:48px;height:40px;background:#E8F1F8"></div>
<div class="abs" style="left:538px;top:765px;width:32px;height:3px;background:#0067C0"></div>
<div class="abs" style="left:583px;top:765px;width:48px;height:3px;background:#0067C0"></div>
<div class="abs" style="left:636px;top:765px;width:33px;height:3px;background:#0067C0"></div>
<div class="abs" style="left:685px;top:765px;width:40px;height:3px;background:#0067C0"></div>
<div class="abs" style="left:570px;top:765px;width:7px;height:3px;background:#6aa3d8"></div>
<div class="abs" style="left:669px;top:765px;width:7px;height:3px;background:#6aa3d8"></div>
<svg class="abs" style="left:399px;top:736px" width="25" height="25" viewBox="0 0 25 25"><defs><linearGradient id="eg" x1="0" y1="0" x2="1" y2="1"><stop offset="0" stop-color="#35c47a"/><stop offset=".5" stop-color="#1fa2d8"/><stop offset="1" stop-color="#0d62c0"/></linearGradient></defs><circle cx="12.5" cy="12.5" r="12" fill="url(#eg)"/><path d="M2 15C3 8 9 6 14 8C19 10 18 15 13 15C9 15 9 19 14 20C17 21 21 19 23 17A11.5 11.5 0 0 1 2 15Z" fill="#0c59b5"/><path d="M9 16C9 12 15 11 17 13C15 11 10 11 9 16Z" fill="#5fe08f"/></svg>
<svg class="abs" style="left:448px;top:737px" width="25" height="22" viewBox="0 0 25 22"><path d="M0 8L12.5 0L25 8V22H0Z" fill="#0a64c8"/><path d="M3 5H22V14L12.5 19L3 14Z" fill="#fff"/><path d="M0 8L12.5 15L25 8V22H0Z" fill="#28a8ea"/><path d="M0 22L12.5 14L25 22Z" fill="#50c8f5"/></svg>
<svg class="abs" style="left:497px;top:736px" width="24" height="24" viewBox="0 0 24 24"><path d="M17 1L23 4V20L17 23L7 13.5L3 17L1 16V8L3 7L7 10.5Z" fill="#1f8ad2"/><path d="M17 6V18L9 12Z" fill="#d5e5f1"/><path d="M3 9.5V14.5L5.5 12Z" fill="#d5e5f1"/></svg>
<svg class="abs" style="left:546px;top:738px" width="23" height="20" viewBox="0 0 23 20"><path d="M0 2H8L10 4H23V20H0Z" fill="#e7b73a"/><rect x="0" y="6" width="23" height="14" fill="#f8d55a"/><rect x="7" y="12" width="9" height="6" fill="#1d8ad8"/><rect x="9.5" y="15" width="4" height="3" fill="#f8d55a"/></svg>
<svg class="abs" style="left:595px;top:736px" width="25" height="25" viewBox="0 0 25 25"><circle cx="12.5" cy="12.5" r="12" fill="#db4437"/><path d="M12.5 12.5L2.1 6.5A12 12 0 0 0 12.5 24.5Z" fill="#0f9d58"/><path d="M12.5 12.5L22.9 6.5A12 12 0 0 1 12.5 24.5Z" fill="#ffcd40"/><path d="M12.5 12.5L2.1 6.5A12 12 0 0 1 22.9 6.5Z" fill="#db4437"/><circle cx="12.5" cy="12.5" r="5.3" fill="#fff"/><circle cx="12.5" cy="12.5" r="4.2" fill="#4285f4"/></svg>
<svg class="abs" style="left:644px;top:736px" width="24" height="24" viewBox="0 0 24 24"><rect width="24" height="24" rx="2.5" fill="#3f3f3f"/><path d="M6 10L18 14V17.5L6 13.5Z" fill="#d97c00"/><path d="M6 8.2L18 4.3V9L6 12.8Z" fill="#ff9a00"/><path d="M6 15.3L18 11.4V16L6 19.8Z" fill="#ff9a00"/></svg>
<svg class="abs" style="left:693px;top:736px" width="24" height="24" viewBox="0 0 24 24"><rect width="24" height="24" rx="3.5" fill="#f27a24"/><rect x="1.5" y="1" width="21" height="3" rx="1.5" fill="#f9a15c" opacity=".7"/><g fill="none" stroke="#fff" stroke-width="2.4"><circle cx="7.8" cy="8" r="3.2"/><circle cx="16.2" cy="8" r="3.2"/><circle cx="7.8" cy="16" r="3.2"/><circle cx="16.2" cy="16" r="3.2"/></g><rect x="8" y="9.5" width="8" height="5" fill="#f27a24"/><path d="M9.5 10.8H14.5M9.5 13.2H14.5" stroke="#fff" stroke-width="1.4"/></svg>
<svg class="abs" style="left:923px;top:735px" width="26" height="25" viewBox="0 0 26 25"><defs><linearGradient id="sun" x1="0" y1="0" x2="0" y2="1"><stop offset="0" stop-color="#f8c02a"/><stop offset="1" stop-color="#f07b12"/></linearGradient></defs><circle cx="11.5" cy="13" r="9" fill="url(#sun)"/><path d="M2 10.5A3 3 0 0 1 5 7.5A3.5 3.5 0 0 1 11.5 7A2.5 2.5 0 0 1 14 10.5Z" fill="#e8f0fa" stroke="#9fbbe0" stroke-width=".8"/><path d="M11 22.5A3 3 0 0 1 13.5 19A3.5 3.5 0 0 1 20 18.5A2.6 2.6 0 0 1 22.5 22.5Z" fill="#e8f0fa" stroke="#9fbbe0" stroke-width=".8"/><circle cx="18" cy="6.5" r="6" fill="#c9281c"/><text x="18" y="10" font-size="9" font-family="Liberation Sans" fill="#fff" text-anchor="middle">1</text></svg>
<div class="abs" style="left:956px;top:740.7px;font-size:13.4px;color:#111;white-space:nowrap">30°C</div>
<div class="abs" style="left:994px;top:740.7px;font-size:13.4px;color:#111;white-space:nowrap">Partly sunny</div>
<svg class="abs" style="left:1092px;top:743px" width="13" height="8" viewBox="0 0 13 8"><path d="M1 7L6.5 1.5L12 7" fill="none" stroke="#111" stroke-width="1.3"/></svg>
<svg class="abs" style="left:1116px;top:740px" width="15" height="17" viewBox="0 0 15 17"><rect x="1.5" y="4" width="8" height="8" rx="1.5" fill="none" stroke="#111" stroke-width="1.2"/><path d="M9.5 7L13.5 5V11L9.5 9" fill="none" stroke="#111" stroke-width="1.2"/><path d="M3 1H8M3 16H8" stroke="#111" stroke-width="1.2"/></svg>
<svg class="abs" style="left:1139px;top:741px" width="17" height="14" viewBox="0 0 17 14"><rect x="3.5" y="4.5" width="12" height="7" fill="none" stroke="#111" stroke-width="1.2"/><rect x="5" y="6" width="8" height="4" fill="#111"/><path d="M2 1V5M5 1V5M0 4H4" stroke="#111" stroke-width="1.2"/></svg>
<svg class="abs" style="left:1166px;top:741px" width="16" height="15" viewBox="0 0 16 15"><path d="M1 14A13 13 0 0 1 14 1M4 14A10 10 0 0 1 14 4M7 14A7 7 0 0 1 14 7M10 14A4 4 0 0 1 14 10" fill="none" stroke="#111" stroke-width="1.2"/><circle cx="13" cy="13" r="1.5" fill="#111"/></svg>
<svg class="abs" style="left:1186px;top:740px" width="18" height="16" viewBox="0 0 18 16"><path d="M1 5.5H4L8.5 1.5V14.5L4 10.5H1Z" fill="none" stroke="#111" stroke-width="1.2"/><path d="M11 5Q12.5 8 11 11M13.5 3Q16 8 13.5 13" fill="none" stroke="#111" stroke-width="1.1"/></svg>
<div class="abs" style="left:1213px;top:741px;font-size:11.2px;color:#111;white-space:nowrap">ENG</div>
<div class="abs" style="left:1254px;top:731px;font-size:11.3px;color:#111;white-space:nowrap">07:14 PM</div>
<div class="abs" style="left:1249px;top:750px;font-size:11.3px;color:#111;white-space:nowrap">01-09-2023</div>
<svg class="abs" style="left:1324px;top:739px" width="26" height="26" viewBox="0 0 26 26"><path d="M1 1H17V15H8L4.5 18.5V15H1Z" fill="#111"/><path d="M3.5 4.5H14.5M3.5 7.5H14.5M3.5 10.5H11" stroke="#fff" stroke-width="1"/><circle cx="16.5" cy="16.2" r="7.2" fill="#d6d6d6" stroke="#666" stroke-width="1"/><path d="M15.3 13.5L17.2 12.2V20.5" fill="none" stroke="#222" stroke-width="1.6"/></svg>
</body></html>
